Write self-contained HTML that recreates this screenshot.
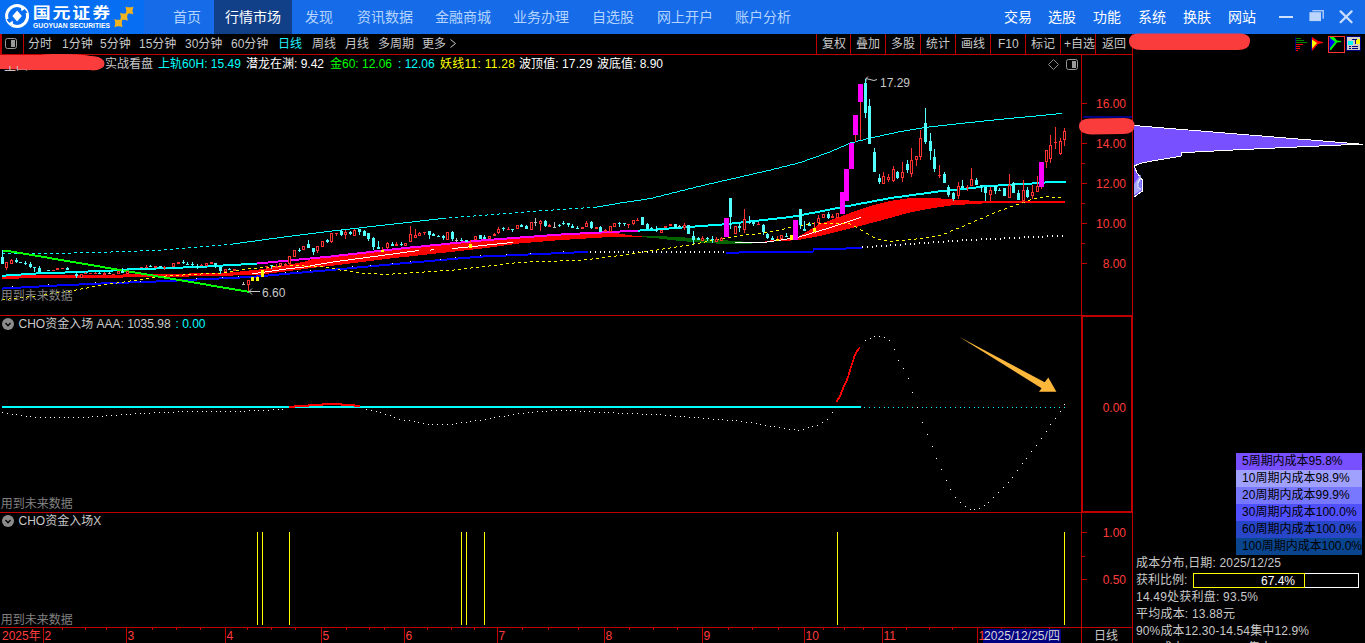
<!DOCTYPE html>
<html lang="zh-CN"><head><meta charset="utf-8"><title>国元证券</title>
<style>
html,body{margin:0;padding:0;background:#000;overflow:hidden}
svg{display:block;font-family:'Liberation Sans','Noto Sans CJK SC',sans-serif}
text{white-space:pre}
</style></head><body>
<svg width="1365" height="643" viewBox="0 0 1365 643">
<rect x="0" y="0" width="1365" height="34" fill="#156be8" />
<rect x="0" y="0" width="144" height="34" fill="#056ef2" />
<rect x="214" y="0" width="78" height="34" fill="#113f88" />
<g>
<circle cx="17.1" cy="16" r="10.5" fill="none" stroke="#fff" stroke-width="3"/>
<path d="M17.1 10.4 L21.9 15.9 L17.1 21.4 L12.4 15.9 Z" fill="#fff"/>
<path d="M22.5 6.5 L27.5 12.5 L24 14 L21 8.5 Z" fill="#056ef2"/>
<path d="M11.5 25.5 L6.5 19.5 L10 18 L13 23.5 Z" fill="#056ef2"/>
<path d="M20.5 6 L25.8 8.2 L21.6 11.2 Z" fill="#fff"/>
<path d="M13.6 26 L8.3 23.8 L12.5 20.8 Z" fill="#fff"/>
</g>
<g transform="scale(1.24 1)">
<text x="26.5" y="18.5" fill="#fff" font-size="14.5" text-anchor="start" font-weight="700" textLength="62.3" lengthAdjust="spacing">国元证券</text>
</g>
<text x="33" y="27.7" fill="#fff" font-size="6.9" text-anchor="start" font-weight="700" textLength="77" lengthAdjust="spacingAndGlyphs">GUOYUAN SECURITIES</text>
<path d="M114.3 18.900000000000002 Q118.5 20.79 122.7 18.900000000000002 Q120.81 23.1 122.7 27.3 Q118.5 25.410000000000004 114.3 27.3 Q116.19 23.1 114.3 18.900000000000002Z" fill="#f0b420"/>
<path d="M120 12.7 Q124 14.5 128 12.7 Q126.2 16.7 128 20.7 Q124 18.9 120 20.7 Q121.8 16.7 120 12.7Z" fill="#f0b420"/>
<path d="M125.4 6.4 Q129.4 8.2 133.4 6.4 Q131.6 10.4 133.4 14.4 Q129.4 12.600000000000001 125.4 14.4 Q127.2 10.4 125.4 6.4Z" fill="#f0b420"/>
<text x="173" y="22" fill="#b4d4ff" font-size="14" text-anchor="start" >首页</text>
<text x="225" y="22" fill="#fff" font-size="14" text-anchor="start" >行情市场</text>
<text x="305" y="22" fill="#b4d4ff" font-size="14" text-anchor="start" >发现</text>
<text x="357" y="22" fill="#b4d4ff" font-size="14" text-anchor="start" >资讯数据</text>
<text x="435" y="22" fill="#b4d4ff" font-size="14" text-anchor="start" >金融商城</text>
<text x="513" y="22" fill="#b4d4ff" font-size="14" text-anchor="start" >业务办理</text>
<text x="592" y="22" fill="#b4d4ff" font-size="14" text-anchor="start" >自选股</text>
<text x="657" y="22" fill="#b4d4ff" font-size="14" text-anchor="start" >网上开户</text>
<text x="735" y="22" fill="#b4d4ff" font-size="14" text-anchor="start" >账户分析</text>
<text x="1004" y="22" fill="#fff" font-size="14" text-anchor="start" >交易</text>
<text x="1048" y="22" fill="#fff" font-size="14" text-anchor="start" >选股</text>
<text x="1093" y="22" fill="#fff" font-size="14" text-anchor="start" >功能</text>
<text x="1138" y="22" fill="#fff" font-size="14" text-anchor="start" >系统</text>
<text x="1183" y="22" fill="#fff" font-size="14" text-anchor="start" >换肤</text>
<text x="1228" y="22" fill="#fff" font-size="14" text-anchor="start" >网站</text>
<rect x="1279" y="16" width="14" height="2" fill="#cfe0fc" />
<path d="M1312.3 10.7 H1323.2 V18.8" fill="none" stroke="#a8c8f8" stroke-width="1.5"/>
<rect x="1309.4" y="12.2" width="11.6" height="8.9" fill="#bcd6fb"/>
<path d="M1340.6 11.4 L1351.6 22.2 M1351.6 11.4 L1340.6 22.2" stroke="#c8dcfb" stroke-width="2.3" stroke-linecap="round"/>
<rect x="0" y="54" width="1133" height="1" fill="#c00000" />
<rect x="0" y="34" width="2" height="20" fill="#c00000" />
<rect x="23" y="34" width="1" height="20" fill="#c00000" />
<rect x="5.5" y="38.5" width="11" height="10" rx="2" fill="none" stroke="#9a9a9a" stroke-width="1"/>
<rect x="11" y="40" width="4" height="7" fill="#9a9a9a" />
<text x="28" y="48" fill="#c8c8c8" font-size="12" text-anchor="start" >分时</text>
<text x="62" y="48" fill="#c8c8c8" font-size="12" text-anchor="start" >1分钟</text>
<text x="100" y="48" fill="#c8c8c8" font-size="12" text-anchor="start" >5分钟</text>
<text x="139" y="48" fill="#c8c8c8" font-size="12" text-anchor="start" >15分钟</text>
<text x="185" y="48" fill="#c8c8c8" font-size="12" text-anchor="start" >30分钟</text>
<text x="231" y="48" fill="#c8c8c8" font-size="12" text-anchor="start" >60分钟</text>
<text x="312" y="48" fill="#c8c8c8" font-size="12" text-anchor="start" >周线</text>
<text x="345" y="48" fill="#c8c8c8" font-size="12" text-anchor="start" >月线</text>
<text x="378" y="48" fill="#c8c8c8" font-size="12" text-anchor="start" >多周期</text>
<text x="422" y="48" fill="#c8c8c8" font-size="12" text-anchor="start" >更多</text>
<text x="278" y="48" fill="#20f0ff" font-size="12" text-anchor="start" >日线</text>
<path d="M450.5 39.5 L455.5 43.5 L450.5 47.5" fill="none" stroke="#c8c8c8" stroke-width="1"/>
<rect x="816" y="34" width="1" height="20" fill="#c00000" />
<rect x="850" y="34" width="1" height="20" fill="#c00000" />
<rect x="885" y="34" width="1" height="20" fill="#c00000" />
<rect x="920" y="34" width="1" height="20" fill="#c00000" />
<rect x="955" y="34" width="1" height="20" fill="#c00000" />
<rect x="990" y="34" width="1" height="20" fill="#c00000" />
<rect x="1025" y="34" width="1" height="20" fill="#c00000" />
<rect x="1060" y="34" width="1" height="20" fill="#c00000" />
<rect x="1095" y="34" width="1" height="20" fill="#c00000" />
<text x="822" y="48" fill="#c8c8c8" font-size="12" text-anchor="start" >复权</text>
<text x="856" y="48" fill="#c8c8c8" font-size="12" text-anchor="start" >叠加</text>
<text x="891" y="48" fill="#c8c8c8" font-size="12" text-anchor="start" >多股</text>
<text x="926" y="48" fill="#c8c8c8" font-size="12" text-anchor="start" >统计</text>
<text x="961" y="48" fill="#c8c8c8" font-size="12" text-anchor="start" >画线</text>
<text x="998" y="48" fill="#c8c8c8" font-size="12" text-anchor="start" >F10</text>
<text x="1031" y="48" fill="#c8c8c8" font-size="12" text-anchor="start" >标记</text>
<text x="1064" y="48" fill="#c8c8c8" font-size="12" text-anchor="start" >+自选</text>
<text x="1102" y="48" fill="#c8c8c8" font-size="12" text-anchor="start" >返回</text>
<rect x="1081" y="54" width="1" height="261" fill="#c00000" />
<rect x="1132" y="34" width="1" height="281" fill="#c00000" />
<rect x="0" y="315" width="1081" height="1" fill="#c00000" />
<rect x="1081" y="315" width="52" height="2" fill="#c00000" />
<rect x="1081" y="511" width="52" height="2" fill="#c00000" />
<rect x="1081" y="315" width="2" height="198" fill="#c00000" />
<rect x="1131" y="315" width="2" height="198" fill="#c00000" />
<rect x="0" y="512" width="1081" height="1" fill="#c00000" />
<rect x="1081" y="513" width="1" height="130" fill="#c00000" />
<rect x="1132" y="513" width="1" height="130" fill="#c00000" />
<rect x="0" y="627" width="1133" height="1" fill="#c00000" />
<g shape-rendering="crispEdges">
</g>
<text x="105" y="68" fill="#c8c8c8" font-size="12" text-anchor="start" >实战看盘</text>
<text x="158" y="68" fill="#00ffff" font-size="12" text-anchor="start" textLength="83">上轨60H: 15.49</text>
<text x="246" y="68" fill="#ffffff" font-size="12" text-anchor="start" textLength="78">潜龙在渊: 9.42</text>
<text x="330" y="68" fill="#00ff00" font-size="12" text-anchor="start" textLength="62">金60: 12.06</text>
<text x="398" y="68" fill="#00ffff" font-size="12" text-anchor="start" >: 12.06</text>
<text x="440" y="68" fill="#ffff00" font-size="12" text-anchor="start" textLength="75">妖线11: 11.28</text>
<text x="519" y="68" fill="#ffffff" font-size="12" text-anchor="start" textLength="73.5">波顶值: 17.29</text>
<text x="597" y="68" fill="#ffffff" font-size="12" text-anchor="start" >波底值: 8.90</text>
<g>
<path d="M0 55 L40 55 Q70 52 98 57 Q106 60 104 66 Q100 71 90 70 L40 70 L0 69 Z" fill="#fa3c3c"/>
<text x="4" y="70" fill="#c8c8c8" font-size="12" text-anchor="start" >主图:</text>
<path d="M0 55 L40 55 Q70 52 98 57 Q106 60 104 66 Q100 71 90 70 L40 70 L18 69.5 L18 66 L0 66 Z" fill="#fa3c3c"/>
<path d="M1053.5 59.5 L1058.5 64.5 L1053.5 69.5 L1048.5 64.5 Z" fill="none" stroke="#8c8c8c" stroke-width="1"/>
<rect x="1066.5" y="59.5" width="11" height="10" rx="2" fill="none" stroke="#9a9a9a" stroke-width="1"/>
<rect x="1072" y="61" width="4" height="7" fill="#9a9a9a" />
</g>
<rect x="2" y="254" width="1" height="1" fill="#00ffff" />
<rect x="3" y="253" width="2" height="1" fill="#00ffff" />
<rect x="8" y="253" width="3" height="1" fill="#00ffff" />
<rect x="14" y="253" width="3" height="1" fill="#00ffff" />
<rect x="20" y="253" width="3" height="1" fill="#00ffff" />
<rect x="26" y="253" width="3" height="1" fill="#00ffff" />
<rect x="32" y="253" width="3" height="1" fill="#00ffff" />
<rect x="38" y="253" width="3" height="1" fill="#00ffff" />
<rect x="44" y="253" width="3" height="1" fill="#00ffff" />
<rect x="50" y="253" width="3" height="1" fill="#00ffff" />
<rect x="56" y="253" width="3" height="1" fill="#00ffff" />
<rect x="62" y="253" width="3" height="1" fill="#00ffff" />
<rect x="68" y="253" width="3" height="1" fill="#00ffff" />
<rect x="74" y="252" width="3" height="1" fill="#00ffff" />
<rect x="80" y="252" width="3" height="1" fill="#00ffff" />
<rect x="86" y="252" width="3" height="1" fill="#00ffff" />
<rect x="92" y="252" width="3" height="1" fill="#00ffff" />
<rect x="98" y="252" width="3" height="1" fill="#00ffff" />
<rect x="104" y="252" width="3" height="1" fill="#00ffff" />
<rect x="110" y="252" width="1" height="1" fill="#00ffff" />
<rect x="111" y="251" width="2" height="1" fill="#00ffff" />
<rect x="116" y="251" width="3" height="1" fill="#00ffff" />
<rect x="122" y="251" width="3" height="1" fill="#00ffff" />
<rect x="128" y="251" width="3" height="1" fill="#00ffff" />
<rect x="134" y="251" width="3" height="1" fill="#00ffff" />
<rect x="140" y="250" width="3" height="1" fill="#00ffff" />
<rect x="146" y="250" width="3" height="1" fill="#00ffff" />
<rect x="152" y="250" width="3" height="1" fill="#00ffff" />
<rect x="158" y="250" width="3" height="1" fill="#00ffff" />
<rect x="164" y="249" width="3" height="1" fill="#00ffff" />
<rect x="170" y="249" width="3" height="1" fill="#00ffff" />
<rect x="176" y="248" width="3" height="1" fill="#00ffff" />
<rect x="182" y="248" width="3" height="1" fill="#00ffff" />
<rect x="188" y="247" width="3" height="1" fill="#00ffff" />
<rect x="194" y="247" width="3" height="1" fill="#00ffff" />
<rect x="200" y="246" width="3" height="1" fill="#00ffff" />
<rect x="206" y="246" width="3" height="1" fill="#00ffff" />
<rect x="212" y="245" width="3" height="1" fill="#00ffff" />
<rect x="218" y="245" width="3" height="1" fill="#00ffff" />
<rect x="224" y="244" width="3" height="1" fill="#00ffff" />
<rect x="230" y="244" width="1" height="1" fill="#00ffff" />
<rect x="230" y="244" width="3" height="1" fill="#00ffff" />
<rect x="233" y="243" width="7" height="1" fill="#00ffff" />
<rect x="240" y="242" width="7" height="1" fill="#00ffff" />
<rect x="247" y="241" width="8" height="1" fill="#00ffff" />
<rect x="255" y="240" width="7" height="1" fill="#00ffff" />
<rect x="262" y="239" width="7" height="1" fill="#00ffff" />
<rect x="269" y="238" width="8" height="1" fill="#00ffff" />
<rect x="277" y="237" width="7" height="1" fill="#00ffff" />
<rect x="284" y="236" width="8" height="1" fill="#00ffff" />
<rect x="292" y="235" width="8" height="1" fill="#00ffff" />
<rect x="300" y="234" width="8" height="1" fill="#00ffff" />
<rect x="308" y="233" width="8" height="1" fill="#00ffff" />
<rect x="316" y="232" width="8" height="1" fill="#00ffff" />
<rect x="324" y="231" width="8" height="1" fill="#00ffff" />
<rect x="332" y="230" width="9" height="1" fill="#00ffff" />
<rect x="341" y="229" width="9" height="1" fill="#00ffff" />
<rect x="350" y="228" width="9" height="1" fill="#00ffff" />
<rect x="359" y="227" width="8" height="1" fill="#00ffff" />
<rect x="367" y="226" width="9" height="1" fill="#00ffff" />
<rect x="376" y="225" width="9" height="1" fill="#00ffff" />
<rect x="385" y="224" width="9" height="1" fill="#00ffff" />
<rect x="394" y="223" width="9" height="1" fill="#00ffff" />
<rect x="403" y="222" width="9" height="1" fill="#00ffff" />
<rect x="412" y="221" width="8" height="1" fill="#00ffff" />
<rect x="420" y="220" width="9" height="1" fill="#00ffff" />
<rect x="429" y="219" width="9" height="1" fill="#00ffff" />
<rect x="438" y="218" width="6" height="1" fill="#00ffff" />
<rect x="443" y="218" width="3" height="1" fill="#00ffff" />
<rect x="449" y="217" width="3" height="1" fill="#00ffff" />
<rect x="455" y="217" width="3" height="1" fill="#00ffff" />
<rect x="461" y="216" width="3" height="1" fill="#00ffff" />
<rect x="467" y="216" width="3" height="1" fill="#00ffff" />
<rect x="473" y="216" width="1" height="1" fill="#00ffff" />
<rect x="474" y="215" width="2" height="1" fill="#00ffff" />
<rect x="479" y="215" width="3" height="1" fill="#00ffff" />
<rect x="485" y="215" width="2" height="1" fill="#00ffff" />
<rect x="487" y="214" width="1" height="1" fill="#00ffff" />
<rect x="491" y="214" width="3" height="1" fill="#00ffff" />
<rect x="497" y="214" width="2" height="1" fill="#00ffff" />
<rect x="499" y="213" width="1" height="1" fill="#00ffff" />
<rect x="503" y="213" width="3" height="1" fill="#00ffff" />
<rect x="509" y="213" width="3" height="1" fill="#00ffff" />
<rect x="515" y="212" width="3" height="1" fill="#00ffff" />
<rect x="521" y="212" width="3" height="1" fill="#00ffff" />
<rect x="527" y="211" width="3" height="1" fill="#00ffff" />
<rect x="533" y="211" width="3" height="1" fill="#00ffff" />
<rect x="539" y="210" width="3" height="1" fill="#00ffff" />
<rect x="545" y="210" width="3" height="1" fill="#00ffff" />
<rect x="551" y="210" width="2" height="1" fill="#00ffff" />
<rect x="553" y="209" width="1" height="1" fill="#00ffff" />
<rect x="557" y="209" width="3" height="1" fill="#00ffff" />
<rect x="563" y="209" width="3" height="1" fill="#00ffff" />
<rect x="569" y="208" width="3" height="1" fill="#00ffff" />
<rect x="575" y="208" width="3" height="1" fill="#00ffff" />
<rect x="581" y="208" width="2" height="1" fill="#00ffff" />
<rect x="583" y="207" width="1" height="1" fill="#00ffff" />
<rect x="587" y="207" width="3" height="1" fill="#00ffff" />
<rect x="593" y="207" width="3" height="1" fill="#00ffff" />
<rect x="595" y="207" width="2" height="1" fill="#00ffff" />
<rect x="597" y="206" width="6" height="1" fill="#00ffff" />
<rect x="603" y="205" width="6" height="1" fill="#00ffff" />
<rect x="609" y="204" width="6" height="1" fill="#00ffff" />
<rect x="615" y="203" width="5" height="1" fill="#00ffff" />
<rect x="620" y="202" width="7" height="1" fill="#00ffff" />
<rect x="627" y="201" width="7" height="1" fill="#00ffff" />
<rect x="634" y="200" width="7" height="1" fill="#00ffff" />
<rect x="641" y="199" width="6" height="1" fill="#00ffff" />
<rect x="647" y="198" width="6" height="1" fill="#00ffff" />
<rect x="653" y="197" width="3" height="1" fill="#00ffff" />
<rect x="656" y="196" width="5" height="1" fill="#00ffff" />
<rect x="661" y="195" width="3" height="1" fill="#00ffff" />
<rect x="664" y="194" width="5" height="1" fill="#00ffff" />
<rect x="669" y="193" width="3" height="1" fill="#00ffff" />
<rect x="672" y="192" width="5" height="1" fill="#00ffff" />
<rect x="677" y="191" width="3" height="1" fill="#00ffff" />
<rect x="680" y="190" width="5" height="1" fill="#00ffff" />
<rect x="685" y="189" width="3" height="1" fill="#00ffff" />
<rect x="688" y="188" width="5" height="1" fill="#00ffff" />
<rect x="693" y="187" width="3" height="1" fill="#00ffff" />
<rect x="696" y="186" width="5" height="1" fill="#00ffff" />
<rect x="701" y="185" width="4" height="1" fill="#00ffff" />
<rect x="705" y="184" width="4" height="1" fill="#00ffff" />
<rect x="709" y="183" width="5" height="1" fill="#00ffff" />
<rect x="714" y="182" width="4" height="1" fill="#00ffff" />
<rect x="718" y="181" width="4" height="1" fill="#00ffff" />
<rect x="722" y="180" width="5" height="1" fill="#00ffff" />
<rect x="727" y="179" width="4" height="1" fill="#00ffff" />
<rect x="731" y="178" width="5" height="1" fill="#00ffff" />
<rect x="736" y="177" width="4" height="1" fill="#00ffff" />
<rect x="740" y="176" width="4" height="1" fill="#00ffff" />
<rect x="744" y="175" width="5" height="1" fill="#00ffff" />
<rect x="749" y="174" width="4" height="1" fill="#00ffff" />
<rect x="753" y="173" width="4" height="1" fill="#00ffff" />
<rect x="757" y="172" width="5" height="1" fill="#00ffff" />
<rect x="762" y="171" width="4" height="1" fill="#00ffff" />
<rect x="766" y="170" width="5" height="1" fill="#00ffff" />
<rect x="771" y="169" width="3" height="1" fill="#00ffff" />
<rect x="774" y="168" width="5" height="1" fill="#00ffff" />
<rect x="779" y="167" width="3" height="1" fill="#00ffff" />
<rect x="782" y="166" width="5" height="1" fill="#00ffff" />
<rect x="787" y="165" width="3" height="1" fill="#00ffff" />
<rect x="790" y="164" width="5" height="1" fill="#00ffff" />
<rect x="795" y="163" width="3" height="1" fill="#00ffff" />
<rect x="798" y="162" width="4" height="1" fill="#00ffff" />
<rect x="802" y="161" width="3" height="1" fill="#00ffff" />
<rect x="805" y="160" width="2" height="1" fill="#00ffff" />
<rect x="807" y="159" width="3" height="1" fill="#00ffff" />
<rect x="810" y="158" width="3" height="1" fill="#00ffff" />
<rect x="813" y="157" width="3" height="1" fill="#00ffff" />
<rect x="816" y="156" width="3" height="1" fill="#00ffff" />
<rect x="819" y="155" width="2" height="1" fill="#00ffff" />
<rect x="821" y="154" width="3" height="1" fill="#00ffff" />
<rect x="824" y="153" width="3" height="1" fill="#00ffff" />
<rect x="827" y="152" width="3" height="1" fill="#00ffff" />
<rect x="830" y="151" width="2" height="1" fill="#00ffff" />
<rect x="832" y="150" width="2" height="1" fill="#00ffff" />
<rect x="834" y="149" width="3" height="1" fill="#00ffff" />
<rect x="837" y="148" width="2" height="1" fill="#00ffff" />
<rect x="839" y="147" width="2" height="1" fill="#00ffff" />
<rect x="841" y="146" width="3" height="1" fill="#00ffff" />
<rect x="844" y="145" width="2" height="1" fill="#00ffff" />
<rect x="846" y="144" width="2" height="1" fill="#00ffff" />
<rect x="848" y="143" width="2" height="1" fill="#00ffff" />
<rect x="850" y="142" width="5" height="1" fill="#00ffff" />
<rect x="855" y="141" width="3" height="1" fill="#00ffff" />
<rect x="858" y="140" width="5" height="1" fill="#00ffff" />
<rect x="863" y="139" width="3" height="1" fill="#00ffff" />
<rect x="866" y="138" width="5" height="1" fill="#00ffff" />
<rect x="871" y="137" width="4" height="1" fill="#00ffff" />
<rect x="875" y="136" width="5" height="1" fill="#00ffff" />
<rect x="880" y="135" width="4" height="1" fill="#00ffff" />
<rect x="884" y="134" width="5" height="1" fill="#00ffff" />
<rect x="889" y="133" width="5" height="1" fill="#00ffff" />
<rect x="894" y="132" width="4" height="1" fill="#00ffff" />
<rect x="898" y="131" width="6" height="1" fill="#00ffff" />
<rect x="904" y="130" width="6" height="1" fill="#00ffff" />
<rect x="910" y="129" width="6" height="1" fill="#00ffff" />
<rect x="916" y="128" width="6" height="1" fill="#00ffff" />
<rect x="922" y="127" width="7" height="1" fill="#00ffff" />
<rect x="929" y="126" width="9" height="1" fill="#00ffff" />
<rect x="938" y="125" width="9" height="1" fill="#00ffff" />
<rect x="947" y="124" width="9" height="1" fill="#00ffff" />
<rect x="956" y="123" width="9" height="1" fill="#00ffff" />
<rect x="965" y="122" width="10" height="1" fill="#00ffff" />
<rect x="975" y="121" width="9" height="1" fill="#00ffff" />
<rect x="984" y="120" width="10" height="1" fill="#00ffff" />
<rect x="994" y="119" width="10" height="1" fill="#00ffff" />
<rect x="1004" y="118" width="10" height="1" fill="#00ffff" />
<rect x="1014" y="117" width="11" height="1" fill="#00ffff" />
<rect x="1025" y="116" width="11" height="1" fill="#00ffff" />
<rect x="1036" y="115" width="10" height="1" fill="#00ffff" />
<rect x="1046" y="114" width="10" height="1" fill="#00ffff" />
<rect x="1056" y="113" width="6" height="1" fill="#00ffff" />
<rect x="2" y="288" width="1" height="2" fill="#0000ff" />
<rect x="3" y="287" width="18" height="2" fill="#0000ff" />
<rect x="21" y="286" width="18" height="2" fill="#0000ff" />
<rect x="39" y="285" width="18" height="2" fill="#0000ff" />
<rect x="57" y="284" width="22" height="2" fill="#0000ff" />
<rect x="79" y="283" width="22" height="2" fill="#0000ff" />
<rect x="101" y="282" width="28" height="2" fill="#0000ff" />
<rect x="129" y="281" width="27" height="2" fill="#0000ff" />
<rect x="156" y="280" width="21" height="2" fill="#0000ff" />
<rect x="177" y="279" width="20" height="2" fill="#0000ff" />
<rect x="197" y="278" width="22" height="2" fill="#0000ff" />
<rect x="219" y="277" width="21" height="2" fill="#0000ff" />
<rect x="240" y="276" width="16" height="2" fill="#0000ff" />
<rect x="256" y="275" width="12" height="2" fill="#0000ff" />
<rect x="268" y="274" width="11" height="2" fill="#0000ff" />
<rect x="279" y="273" width="11" height="2" fill="#0000ff" />
<rect x="290" y="272" width="12" height="2" fill="#0000ff" />
<rect x="302" y="271" width="11" height="2" fill="#0000ff" />
<rect x="313" y="270" width="12" height="2" fill="#0000ff" />
<rect x="325" y="269" width="11" height="2" fill="#0000ff" />
<rect x="336" y="268" width="11" height="2" fill="#0000ff" />
<rect x="347" y="267" width="10" height="2" fill="#0000ff" />
<rect x="357" y="266" width="11" height="2" fill="#0000ff" />
<rect x="368" y="265" width="11" height="2" fill="#0000ff" />
<rect x="379" y="264" width="11" height="2" fill="#0000ff" />
<rect x="390" y="263" width="10" height="2" fill="#0000ff" />
<rect x="400" y="262" width="12" height="2" fill="#0000ff" />
<rect x="412" y="261" width="12" height="2" fill="#0000ff" />
<rect x="424" y="260" width="11" height="2" fill="#0000ff" />
<rect x="435" y="259" width="12" height="2" fill="#0000ff" />
<rect x="447" y="258" width="11" height="2" fill="#0000ff" />
<rect x="458" y="257" width="12" height="2" fill="#0000ff" />
<rect x="470" y="256" width="13" height="2" fill="#0000ff" />
<rect x="483" y="255" width="23" height="2" fill="#0000ff" />
<rect x="506" y="254" width="22" height="2" fill="#0000ff" />
<rect x="528" y="253" width="23" height="2" fill="#0000ff" />
<rect x="551" y="252" width="23" height="2" fill="#0000ff" />
<rect x="574" y="251" width="14" height="2" fill="#0000ff" />
<rect x="726" y="252" width="13" height="2" fill="#0000ff" />
<rect x="739" y="251" width="74" height="2" fill="#0000ff" />
<rect x="813" y="248" width="1" height="4" fill="#0000ff" />
<rect x="814" y="248" width="32" height="2" fill="#0000ff" />
<rect x="846" y="247" width="16" height="2" fill="#0000ff" />
<rect x="590" y="251" width="1" height="2" fill="#fff" />
<rect x="595" y="251" width="1" height="2" fill="#fff" />
<rect x="600" y="251" width="1" height="2" fill="#fff" />
<rect x="604" y="251" width="1" height="2" fill="#fff" />
<rect x="609" y="251" width="1" height="2" fill="#fff" />
<rect x="614" y="251" width="1" height="2" fill="#fff" />
<rect x="618" y="251" width="1" height="2" fill="#fff" />
<rect x="623" y="251" width="1" height="2" fill="#fff" />
<rect x="628" y="251" width="1" height="2" fill="#fff" />
<rect x="633" y="251" width="1" height="2" fill="#fff" />
<rect x="638" y="251" width="1" height="2" fill="#fff" />
<rect x="642" y="251" width="1" height="2" fill="#fff" />
<rect x="647" y="251" width="1" height="2" fill="#fff" />
<rect x="652" y="251" width="1" height="2" fill="#fff" />
<rect x="656" y="251" width="1" height="2" fill="#fff" />
<rect x="661" y="251" width="1" height="2" fill="#fff" />
<rect x="666" y="251" width="1" height="2" fill="#fff" />
<rect x="671" y="251" width="1" height="2" fill="#fff" />
<rect x="676" y="251" width="1" height="2" fill="#fff" />
<rect x="680" y="251" width="1" height="2" fill="#fff" />
<rect x="685" y="251" width="1" height="2" fill="#fff" />
<rect x="690" y="251" width="1" height="2" fill="#fff" />
<rect x="694" y="251" width="1" height="2" fill="#fff" />
<rect x="699" y="251" width="1" height="2" fill="#fff" />
<rect x="704" y="251" width="1" height="2" fill="#fff" />
<rect x="709" y="251" width="1" height="2" fill="#fff" />
<rect x="714" y="251" width="1" height="2" fill="#fff" />
<rect x="718" y="251" width="1" height="2" fill="#fff" />
<rect x="723" y="251" width="1" height="2" fill="#fff" />
<rect x="862" y="246" width="1" height="2" fill="#fff" />
<rect x="867" y="246" width="1" height="2" fill="#fff" />
<rect x="872" y="246" width="1" height="2" fill="#fff" />
<rect x="876" y="245" width="1" height="2" fill="#fff" />
<rect x="881" y="245" width="1" height="2" fill="#fff" />
<rect x="886" y="245" width="1" height="2" fill="#fff" />
<rect x="890" y="244" width="1" height="2" fill="#fff" />
<rect x="895" y="244" width="1" height="2" fill="#fff" />
<rect x="900" y="244" width="1" height="2" fill="#fff" />
<rect x="905" y="243" width="1" height="2" fill="#fff" />
<rect x="910" y="243" width="1" height="2" fill="#fff" />
<rect x="914" y="243" width="1" height="2" fill="#fff" />
<rect x="919" y="242" width="1" height="2" fill="#fff" />
<rect x="924" y="242" width="1" height="2" fill="#fff" />
<rect x="928" y="242" width="1" height="2" fill="#fff" />
<rect x="933" y="241" width="1" height="2" fill="#fff" />
<rect x="938" y="241" width="1" height="2" fill="#fff" />
<rect x="943" y="241" width="1" height="2" fill="#fff" />
<rect x="948" y="240" width="1" height="2" fill="#fff" />
<rect x="952" y="240" width="1" height="2" fill="#fff" />
<rect x="957" y="240" width="1" height="2" fill="#fff" />
<rect x="962" y="239" width="1" height="2" fill="#fff" />
<rect x="966" y="239" width="1" height="2" fill="#fff" />
<rect x="971" y="239" width="1" height="2" fill="#fff" />
<rect x="976" y="239" width="1" height="2" fill="#fff" />
<rect x="981" y="238" width="1" height="2" fill="#fff" />
<rect x="986" y="238" width="1" height="2" fill="#fff" />
<rect x="990" y="238" width="1" height="2" fill="#fff" />
<rect x="995" y="238" width="1" height="2" fill="#fff" />
<rect x="1000" y="238" width="1" height="2" fill="#fff" />
<rect x="1004" y="237" width="1" height="2" fill="#fff" />
<rect x="1009" y="237" width="1" height="2" fill="#fff" />
<rect x="1014" y="237" width="1" height="2" fill="#fff" />
<rect x="1019" y="237" width="1" height="2" fill="#fff" />
<rect x="1024" y="236" width="1" height="2" fill="#fff" />
<rect x="1028" y="236" width="1" height="2" fill="#fff" />
<rect x="1033" y="236" width="1" height="2" fill="#fff" />
<rect x="1038" y="236" width="1" height="2" fill="#fff" />
<rect x="1042" y="236" width="1" height="2" fill="#fff" />
<rect x="1047" y="235" width="1" height="2" fill="#fff" />
<rect x="1052" y="235" width="1" height="2" fill="#fff" />
<rect x="1057" y="235" width="1" height="2" fill="#fff" />
<rect x="1062" y="235" width="1" height="2" fill="#fff" />
<rect x="12" y="286" width="1" height="1" fill="#fff" />
<rect x="48" y="284" width="1" height="1" fill="#fff" />
<rect x="95" y="282" width="1" height="1" fill="#fff" />
<rect x="140" y="281" width="1" height="1" fill="#fff" />
<rect x="175" y="279" width="1" height="1" fill="#fff" />
<rect x="196" y="278" width="1" height="1" fill="#fff" />
<rect x="222" y="277" width="1" height="1" fill="#fff" />
<rect x="238" y="276" width="1" height="1" fill="#fff" />
<rect x="262" y="274" width="1" height="1" fill="#fff" />
<rect x="285" y="272" width="1" height="1" fill="#fff" />
<rect x="297" y="271" width="1" height="1" fill="#fff" />
<rect x="310" y="270" width="1" height="1" fill="#fff" />
<rect x="332" y="268" width="1" height="1" fill="#fff" />
<rect x="352" y="266" width="1" height="1" fill="#fff" />
<rect x="370" y="265" width="1" height="1" fill="#fff" />
<rect x="392" y="263" width="1" height="1" fill="#fff" />
<rect x="410" y="261" width="1" height="1" fill="#fff" />
<rect x="440" y="259" width="1" height="1" fill="#fff" />
<rect x="455" y="257" width="1" height="1" fill="#fff" />
<rect x="480" y="255" width="1" height="1" fill="#fff" />
<rect x="506" y="254" width="1" height="1" fill="#fff" />
<rect x="530" y="253" width="1" height="1" fill="#fff" />
<rect x="563" y="251" width="1" height="1" fill="#fff" />
<polyline points="2,263 2,250" fill="none" stroke="#00ffff" stroke-width="1" shape-rendering="crispEdges" />
<rect x="2" y="276" width="17" height="3" fill="#ff0000" />
<rect x="19" y="275" width="104" height="3" fill="#ff0000" />
<rect x="123" y="274" width="66" height="3" fill="#ff0000" />
<rect x="189" y="273" width="16" height="3" fill="#ff0000" />
<polygon points="204,273.3 230,272.5 261,269.3 280,266.2 292,264 305,261.5 315,257.9 320,257.5 325,257.0 330,256.5 335,255.9 340,255.4 345,254.8 350,254.2 355,253.6 360,253.1 365,252.5 370,251.9 375,251.4 380,250.8 385,250.2 390,249.6 395,249.1 400,248.5 405,248.0 410,247.5 415,247.0 420,246.5 425,246.0 430,245.5 435,245.0 440,244.5 445,244.0 450,243.5 455,243.0 460,242.5 465,242.0 470,241.5 475,241.0 480,240.5 485,240.1 490,239.8 495,239.4 500,239.0 505,238.6 510,238.2 515,237.9 520,237.5 525,237.1 530,236.8 535,236.4 540,236.0 545,235.6 550,235.2 555,234.9 560,234.5 565,234.2 570,234.0 575,233.8 580,233.5 585,233.2 590,233.0 595,232.8 600,232.5 605,232.2 610,232.0 612,232.5 632,235.5 642,236 642,237 615,236.7 600,237.6 560,240.1 520,243.4 480,248.8 390,258.5 330,266 310,268.2 292,270.7 261,274.5 230,275.6 204,276.3" fill="#ff0000" shape-rendering="crispEdges"/>
<polygon points="642,235.5 655,235.8 690,237.8 720,240 740,241.3 752,242.3 752,244 720,243.8 690,241.8 673,240.2 655,238 642,237.2" fill="#006400" shape-rendering="crispEdges"/>
<polygon points="765,241 797,237.5 810,229.8 820,224 840,216.7 850,213 870,206 890,201 910,198 940,198.4 960,200.1 990,201.5 1065,201 1065,203.2 990,203.2 975,203.8 950,205.6 930,208.6 910,212.4 890,218 860,226 840,231 820,236 797,240.2 765,242" fill="#ff0000" shape-rendering="crispEdges"/>
<rect x="252" y="273" width="6" height="1" fill="#fff" />
<rect x="258" y="272" width="7" height="1" fill="#fff" />
<rect x="265" y="271" width="7" height="1" fill="#fff" />
<rect x="272" y="270" width="7" height="1" fill="#fff" />
<rect x="279" y="269" width="7" height="1" fill="#fff" />
<rect x="286" y="268" width="9" height="1" fill="#fff" />
<rect x="295" y="267" width="9" height="1" fill="#fff" />
<rect x="304" y="266" width="6" height="1" fill="#fff" />
<rect x="310" y="265" width="5" height="1" fill="#fff" />
<rect x="315" y="264" width="6" height="1" fill="#fff" />
<rect x="321" y="263" width="6" height="1" fill="#fff" />
<rect x="327" y="262" width="6" height="1" fill="#fff" />
<rect x="333" y="261" width="7" height="1" fill="#fff" />
<rect x="340" y="260" width="8" height="1" fill="#fff" />
<rect x="348" y="259" width="7" height="1" fill="#fff" />
<rect x="355" y="258" width="8" height="1" fill="#fff" />
<rect x="363" y="257" width="7" height="1" fill="#fff" />
<rect x="370" y="256" width="8" height="1" fill="#fff" />
<rect x="378" y="255" width="7" height="1" fill="#fff" />
<rect x="385" y="254" width="8" height="1" fill="#fff" />
<rect x="393" y="253" width="7" height="1" fill="#fff" />
<rect x="400" y="252" width="7" height="1" fill="#fff" />
<rect x="407" y="251" width="8" height="1" fill="#fff" />
<rect x="415" y="250" width="4" height="1" fill="#fff" />
<rect x="430" y="250" width="1" height="1" fill="#fff" />
<rect x="431" y="249" width="3" height="1" fill="#fff" />
<rect x="452" y="248" width="6" height="1" fill="#fff" />
<rect x="458" y="247" width="10" height="1" fill="#fff" />
<rect x="468" y="246" width="10" height="1" fill="#fff" />
<rect x="478" y="245" width="9" height="1" fill="#fff" />
<rect x="487" y="244" width="10" height="1" fill="#fff" />
<rect x="497" y="243" width="10" height="1" fill="#fff" />
<rect x="507" y="242" width="6" height="1" fill="#fff" />
<rect x="735" y="242" width="32" height="1" fill="#fff" />
<rect x="767" y="241" width="7" height="1" fill="#fff" />
<rect x="774" y="240" width="7" height="1" fill="#fff" />
<rect x="781" y="239" width="6" height="1" fill="#fff" />
<rect x="787" y="238" width="7" height="1" fill="#fff" />
<rect x="794" y="237" width="5" height="1" fill="#fff" />
<rect x="799" y="236" width="3" height="1" fill="#fff" />
<rect x="802" y="235" width="4" height="1" fill="#fff" />
<rect x="806" y="234" width="3" height="1" fill="#fff" />
<rect x="809" y="233" width="3" height="1" fill="#fff" />
<rect x="812" y="232" width="4" height="1" fill="#fff" />
<rect x="816" y="231" width="3" height="1" fill="#fff" />
<rect x="819" y="230" width="3" height="1" fill="#fff" />
<rect x="822" y="229" width="4" height="1" fill="#fff" />
<rect x="826" y="228" width="3" height="1" fill="#fff" />
<rect x="829" y="227" width="3" height="1" fill="#fff" />
<rect x="832" y="226" width="3" height="1" fill="#fff" />
<rect x="835" y="225" width="3" height="1" fill="#fff" />
<rect x="838" y="224" width="3" height="1" fill="#fff" />
<rect x="841" y="223" width="3" height="1" fill="#fff" />
<rect x="844" y="222" width="3" height="1" fill="#fff" />
<rect x="847" y="221" width="3" height="1" fill="#fff" />
<rect x="850" y="220" width="3" height="1" fill="#fff" />
<rect x="853" y="219" width="3" height="1" fill="#fff" />
<rect x="856" y="218" width="3" height="1" fill="#fff" />
<rect x="859" y="217" width="2" height="1" fill="#fff" />
<rect x="2" y="299" width="3" height="1" fill="#ffff00" />
<rect x="8" y="299" width="1" height="1" fill="#ffff00" />
<rect x="9" y="298" width="2" height="1" fill="#ffff00" />
<rect x="14" y="298" width="3" height="1" fill="#ffff00" />
<rect x="20" y="297" width="3" height="1" fill="#ffff00" />
<rect x="26" y="297" width="1" height="1" fill="#ffff00" />
<rect x="27" y="296" width="2" height="1" fill="#ffff00" />
<rect x="32" y="296" width="3" height="1" fill="#ffff00" />
<rect x="38" y="295" width="3" height="1" fill="#ffff00" />
<rect x="44" y="294" width="3" height="1" fill="#ffff00" />
<rect x="50" y="293" width="3" height="1" fill="#ffff00" />
<rect x="56" y="292" width="3" height="1" fill="#ffff00" />
<rect x="62" y="292" width="2" height="1" fill="#ffff00" />
<rect x="64" y="291" width="1" height="1" fill="#ffff00" />
<rect x="68" y="291" width="2" height="1" fill="#ffff00" />
<rect x="70" y="290" width="1" height="1" fill="#ffff00" />
<rect x="74" y="290" width="2" height="1" fill="#ffff00" />
<rect x="76" y="289" width="1" height="1" fill="#ffff00" />
<rect x="80" y="289" width="1" height="1" fill="#ffff00" />
<rect x="81" y="288" width="2" height="1" fill="#ffff00" />
<rect x="86" y="288" width="1" height="1" fill="#ffff00" />
<rect x="87" y="287" width="2" height="1" fill="#ffff00" />
<rect x="92" y="286" width="3" height="1" fill="#ffff00" />
<rect x="98" y="285" width="3" height="1" fill="#ffff00" />
<rect x="104" y="284" width="3" height="1" fill="#ffff00" />
<rect x="110" y="283" width="3" height="1" fill="#ffff00" />
<rect x="116" y="283" width="1" height="1" fill="#ffff00" />
<rect x="117" y="282" width="2" height="1" fill="#ffff00" />
<rect x="122" y="282" width="2" height="1" fill="#ffff00" />
<rect x="124" y="281" width="1" height="1" fill="#ffff00" />
<rect x="128" y="281" width="2" height="1" fill="#ffff00" />
<rect x="130" y="280" width="1" height="1" fill="#ffff00" />
<rect x="134" y="280" width="3" height="1" fill="#ffff00" />
<rect x="140" y="279" width="3" height="1" fill="#ffff00" />
<rect x="146" y="278" width="3" height="1" fill="#ffff00" />
<rect x="152" y="277" width="3" height="1" fill="#ffff00" />
<rect x="158" y="276" width="3" height="1" fill="#ffff00" />
<rect x="164" y="276" width="2" height="1" fill="#ffff00" />
<rect x="166" y="275" width="1" height="1" fill="#ffff00" />
<rect x="170" y="275" width="3" height="1" fill="#ffff00" />
<rect x="176" y="275" width="3" height="1" fill="#ffff00" />
<rect x="182" y="275" width="1" height="1" fill="#ffff00" />
<rect x="183" y="274" width="2" height="1" fill="#ffff00" />
<rect x="188" y="274" width="3" height="1" fill="#ffff00" />
<rect x="194" y="274" width="3" height="1" fill="#ffff00" />
<rect x="200" y="274" width="1" height="1" fill="#ffff00" />
<rect x="201" y="273" width="2" height="1" fill="#ffff00" />
<rect x="206" y="273" width="3" height="1" fill="#ffff00" />
<rect x="212" y="273" width="3" height="1" fill="#ffff00" />
<rect x="218" y="273" width="2" height="1" fill="#ffff00" />
<rect x="220" y="272" width="1" height="1" fill="#ffff00" />
<rect x="224" y="272" width="3" height="1" fill="#ffff00" />
<rect x="230" y="271" width="3" height="1" fill="#ffff00" />
<rect x="236" y="270" width="3" height="1" fill="#ffff00" />
<rect x="242" y="269" width="3" height="1" fill="#ffff00" />
<rect x="248" y="268" width="3" height="1" fill="#ffff00" />
<rect x="254" y="268" width="3" height="1" fill="#ffff00" />
<rect x="260" y="267" width="3" height="1" fill="#ffff00" />
<rect x="266" y="267" width="3" height="1" fill="#ffff00" />
<rect x="272" y="266" width="3" height="1" fill="#ffff00" />
<rect x="278" y="266" width="3" height="1" fill="#ffff00" />
<rect x="284" y="265" width="3" height="1" fill="#ffff00" />
<rect x="290" y="265" width="3" height="1" fill="#ffff00" />
<rect x="296" y="265" width="3" height="1" fill="#ffff00" />
<rect x="302" y="265" width="2" height="1" fill="#ffff00" />
<rect x="304" y="266" width="1" height="1" fill="#ffff00" />
<rect x="308" y="266" width="3" height="1" fill="#ffff00" />
<rect x="314" y="266" width="3" height="1" fill="#ffff00" />
<rect x="320" y="266" width="3" height="1" fill="#ffff00" />
<rect x="326" y="267" width="3" height="1" fill="#ffff00" />
<rect x="332" y="268" width="3" height="1" fill="#ffff00" />
<rect x="338" y="269" width="2" height="1" fill="#ffff00" />
<rect x="340" y="270" width="1" height="1" fill="#ffff00" />
<rect x="344" y="270" width="3" height="1" fill="#ffff00" />
<rect x="350" y="271" width="3" height="1" fill="#ffff00" />
<rect x="356" y="272" width="3" height="1" fill="#ffff00" />
<rect x="362" y="273" width="3" height="1" fill="#ffff00" />
<rect x="368" y="273" width="3" height="1" fill="#ffff00" />
<rect x="374" y="273" width="3" height="1" fill="#ffff00" />
<rect x="380" y="274" width="3" height="1" fill="#ffff00" />
<rect x="386" y="274" width="3" height="1" fill="#ffff00" />
<rect x="392" y="274" width="1" height="1" fill="#ffff00" />
<rect x="393" y="273" width="2" height="1" fill="#ffff00" />
<rect x="398" y="273" width="3" height="1" fill="#ffff00" />
<rect x="404" y="273" width="3" height="1" fill="#ffff00" />
<rect x="410" y="272" width="3" height="1" fill="#ffff00" />
<rect x="416" y="272" width="3" height="1" fill="#ffff00" />
<rect x="422" y="272" width="2" height="1" fill="#ffff00" />
<rect x="424" y="271" width="1" height="1" fill="#ffff00" />
<rect x="428" y="271" width="3" height="1" fill="#ffff00" />
<rect x="434" y="271" width="3" height="1" fill="#ffff00" />
<rect x="440" y="270" width="3" height="1" fill="#ffff00" />
<rect x="446" y="270" width="3" height="1" fill="#ffff00" />
<rect x="452" y="270" width="2" height="1" fill="#ffff00" />
<rect x="454" y="269" width="1" height="1" fill="#ffff00" />
<rect x="458" y="269" width="3" height="1" fill="#ffff00" />
<rect x="464" y="268" width="3" height="1" fill="#ffff00" />
<rect x="470" y="268" width="1" height="1" fill="#ffff00" />
<rect x="471" y="267" width="2" height="1" fill="#ffff00" />
<rect x="476" y="267" width="3" height="1" fill="#ffff00" />
<rect x="482" y="266" width="3" height="1" fill="#ffff00" />
<rect x="488" y="266" width="1" height="1" fill="#ffff00" />
<rect x="489" y="265" width="2" height="1" fill="#ffff00" />
<rect x="494" y="265" width="3" height="1" fill="#ffff00" />
<rect x="500" y="264" width="3" height="1" fill="#ffff00" />
<rect x="506" y="263" width="3" height="1" fill="#ffff00" />
<rect x="512" y="263" width="2" height="1" fill="#ffff00" />
<rect x="514" y="262" width="1" height="1" fill="#ffff00" />
<rect x="518" y="262" width="3" height="1" fill="#ffff00" />
<rect x="524" y="262" width="3" height="1" fill="#ffff00" />
<rect x="530" y="261" width="3" height="1" fill="#ffff00" />
<rect x="536" y="261" width="3" height="1" fill="#ffff00" />
<rect x="542" y="261" width="3" height="1" fill="#ffff00" />
<rect x="548" y="261" width="3" height="1" fill="#ffff00" />
<rect x="554" y="261" width="3" height="1" fill="#ffff00" />
<rect x="560" y="260" width="3" height="1" fill="#ffff00" />
<rect x="566" y="260" width="3" height="1" fill="#ffff00" />
<rect x="572" y="260" width="3" height="1" fill="#ffff00" />
<rect x="578" y="260" width="3" height="1" fill="#ffff00" />
<rect x="584" y="259" width="3" height="1" fill="#ffff00" />
<rect x="590" y="259" width="2" height="1" fill="#ffff00" />
<rect x="592" y="258" width="1" height="1" fill="#ffff00" />
<rect x="596" y="258" width="3" height="1" fill="#ffff00" />
<rect x="602" y="257" width="3" height="1" fill="#ffff00" />
<rect x="608" y="256" width="3" height="1" fill="#ffff00" />
<rect x="614" y="256" width="2" height="1" fill="#ffff00" />
<rect x="616" y="255" width="1" height="1" fill="#ffff00" />
<rect x="620" y="255" width="3" height="1" fill="#ffff00" />
<rect x="626" y="254" width="3" height="1" fill="#ffff00" />
<rect x="632" y="253" width="3" height="1" fill="#ffff00" />
<rect x="638" y="252" width="3" height="1" fill="#ffff00" />
<rect x="644" y="251" width="3" height="1" fill="#ffff00" />
<rect x="650" y="250" width="3" height="1" fill="#ffff00" />
<rect x="656" y="250" width="1" height="1" fill="#ffff00" />
<rect x="657" y="249" width="2" height="1" fill="#ffff00" />
<rect x="662" y="249" width="1" height="1" fill="#ffff00" />
<rect x="663" y="248" width="2" height="1" fill="#ffff00" />
<rect x="668" y="248" width="2" height="1" fill="#ffff00" />
<rect x="670" y="247" width="1" height="1" fill="#ffff00" />
<rect x="674" y="247" width="2" height="1" fill="#ffff00" />
<rect x="676" y="246" width="1" height="1" fill="#ffff00" />
<rect x="680" y="246" width="2" height="1" fill="#ffff00" />
<rect x="682" y="245" width="1" height="1" fill="#ffff00" />
<rect x="686" y="245" width="3" height="1" fill="#ffff00" />
<rect x="692" y="244" width="2" height="1" fill="#ffff00" />
<rect x="694" y="243" width="1" height="1" fill="#ffff00" />
<rect x="698" y="243" width="2" height="1" fill="#ffff00" />
<rect x="700" y="242" width="1" height="1" fill="#ffff00" />
<rect x="704" y="242" width="1" height="1" fill="#ffff00" />
<rect x="705" y="241" width="2" height="1" fill="#ffff00" />
<rect x="710" y="240" width="3" height="1" fill="#ffff00" />
<rect x="716" y="239" width="3" height="1" fill="#ffff00" />
<rect x="722" y="238" width="3" height="1" fill="#ffff00" />
<rect x="728" y="237" width="3" height="1" fill="#ffff00" />
<rect x="734" y="236" width="3" height="1" fill="#ffff00" />
<rect x="740" y="235" width="3" height="1" fill="#ffff00" />
<rect x="746" y="234" width="3" height="1" fill="#ffff00" />
<rect x="752" y="234" width="3" height="1" fill="#ffff00" />
<rect x="758" y="233" width="3" height="1" fill="#ffff00" />
<rect x="764" y="232" width="3" height="1" fill="#ffff00" />
<rect x="770" y="231" width="3" height="1" fill="#ffff00" />
<rect x="776" y="230" width="3" height="1" fill="#ffff00" />
<rect x="782" y="229" width="2" height="1" fill="#ffff00" />
<rect x="784" y="228" width="1" height="1" fill="#ffff00" />
<rect x="788" y="227" width="3" height="1" fill="#ffff00" />
<rect x="794" y="226" width="3" height="1" fill="#ffff00" />
<rect x="800" y="225" width="3" height="1" fill="#ffff00" />
<rect x="806" y="224" width="2" height="1" fill="#ffff00" />
<rect x="808" y="223" width="1" height="1" fill="#ffff00" />
<rect x="812" y="223" width="3" height="1" fill="#ffff00" />
<rect x="818" y="223" width="3" height="1" fill="#ffff00" />
<rect x="824" y="223" width="3" height="1" fill="#ffff00" />
<rect x="830" y="223" width="3" height="1" fill="#ffff00" />
<rect x="836" y="223" width="3" height="1" fill="#ffff00" />
<rect x="842" y="223" width="3" height="1" fill="#ffff00" />
<rect x="848" y="223" width="2" height="1" fill="#ffff00" />
<rect x="850" y="224" width="1" height="1" fill="#ffff00" />
<rect x="854" y="226" width="2" height="1" fill="#ffff00" />
<rect x="856" y="227" width="1" height="1" fill="#ffff00" />
<rect x="860" y="229" width="1" height="1" fill="#ffff00" />
<rect x="861" y="230" width="2" height="1" fill="#ffff00" />
<rect x="866" y="233" width="2" height="1" fill="#ffff00" />
<rect x="868" y="234" width="1" height="1" fill="#ffff00" />
<rect x="872" y="236" width="1" height="1" fill="#ffff00" />
<rect x="873" y="237" width="2" height="1" fill="#ffff00" />
<rect x="878" y="239" width="3" height="1" fill="#ffff00" />
<rect x="884" y="240" width="3" height="1" fill="#ffff00" />
<rect x="890" y="241" width="3" height="1" fill="#ffff00" />
<rect x="896" y="240" width="3" height="1" fill="#ffff00" />
<rect x="902" y="240" width="3" height="1" fill="#ffff00" />
<rect x="908" y="239" width="3" height="1" fill="#ffff00" />
<rect x="914" y="239" width="2" height="1" fill="#ffff00" />
<rect x="916" y="238" width="1" height="1" fill="#ffff00" />
<rect x="920" y="238" width="3" height="1" fill="#ffff00" />
<rect x="926" y="237" width="3" height="1" fill="#ffff00" />
<rect x="932" y="236" width="3" height="1" fill="#ffff00" />
<rect x="938" y="235" width="3" height="1" fill="#ffff00" />
<rect x="944" y="233" width="3" height="1" fill="#ffff00" />
<rect x="950" y="231" width="1" height="1" fill="#ffff00" />
<rect x="951" y="230" width="2" height="1" fill="#ffff00" />
<rect x="956" y="228" width="3" height="1" fill="#ffff00" />
<rect x="962" y="226" width="2" height="1" fill="#ffff00" />
<rect x="964" y="225" width="1" height="1" fill="#ffff00" />
<rect x="968" y="223" width="3" height="1" fill="#ffff00" />
<rect x="974" y="221" width="1" height="1" fill="#ffff00" />
<rect x="975" y="220" width="2" height="1" fill="#ffff00" />
<rect x="980" y="218" width="3" height="1" fill="#ffff00" />
<rect x="986" y="216" width="1" height="1" fill="#ffff00" />
<rect x="987" y="215" width="2" height="1" fill="#ffff00" />
<rect x="992" y="213" width="2" height="1" fill="#ffff00" />
<rect x="994" y="212" width="1" height="1" fill="#ffff00" />
<rect x="998" y="211" width="1" height="1" fill="#ffff00" />
<rect x="999" y="210" width="2" height="1" fill="#ffff00" />
<rect x="1004" y="209" width="1" height="1" fill="#ffff00" />
<rect x="1005" y="208" width="2" height="1" fill="#ffff00" />
<rect x="1010" y="206" width="3" height="1" fill="#ffff00" />
<rect x="1016" y="204" width="3" height="1" fill="#ffff00" />
<rect x="1022" y="202" width="3" height="1" fill="#ffff00" />
<rect x="1028" y="200" width="2" height="1" fill="#ffff00" />
<rect x="1030" y="199" width="1" height="1" fill="#ffff00" />
<rect x="1034" y="198" width="3" height="1" fill="#ffff00" />
<rect x="1040" y="197" width="3" height="1" fill="#ffff00" />
<rect x="1046" y="196" width="3" height="1" fill="#ffff00" />
<rect x="1052" y="197" width="3" height="1" fill="#ffff00" />
<rect x="1058" y="197" width="3" height="1" fill="#ffff00" />
<rect x="2" y="275" width="4" height="2" fill="#00ffff" />
<rect x="6" y="274" width="15" height="2" fill="#00ffff" />
<rect x="21" y="273" width="15" height="2" fill="#00ffff" />
<rect x="36" y="272" width="29" height="2" fill="#00ffff" />
<rect x="65" y="271" width="23" height="2" fill="#00ffff" />
<rect x="88" y="270" width="25" height="2" fill="#00ffff" />
<rect x="113" y="269" width="14" height="2" fill="#00ffff" />
<rect x="127" y="268" width="29" height="2" fill="#00ffff" />
<rect x="156" y="267" width="27" height="2" fill="#00ffff" />
<rect x="183" y="266" width="24" height="2" fill="#00ffff" />
<rect x="207" y="265" width="16" height="2" fill="#00ffff" />
<rect x="223" y="264" width="18" height="2" fill="#00ffff" />
<rect x="241" y="263" width="16" height="2" fill="#00ffff" />
<rect x="257" y="262" width="1" height="2" fill="#00ffff" />
<rect x="257" y="262" width="11" height="2" fill="#ff00ff" />
<rect x="268" y="261" width="10" height="2" fill="#ff00ff" />
<rect x="278" y="260" width="11" height="2" fill="#ff00ff" />
<rect x="289" y="259" width="10" height="2" fill="#ff00ff" />
<rect x="299" y="258" width="11" height="2" fill="#ff00ff" />
<rect x="310" y="257" width="10" height="2" fill="#ff00ff" />
<rect x="320" y="256" width="11" height="2" fill="#ff00ff" />
<rect x="331" y="255" width="8" height="2" fill="#ff00ff" />
<rect x="339" y="254" width="9" height="2" fill="#ff00ff" />
<rect x="348" y="253" width="9" height="2" fill="#ff00ff" />
<rect x="357" y="252" width="9" height="2" fill="#ff00ff" />
<rect x="366" y="251" width="8" height="2" fill="#ff00ff" />
<rect x="374" y="250" width="9" height="2" fill="#ff00ff" />
<rect x="383" y="249" width="9" height="2" fill="#ff00ff" />
<rect x="392" y="248" width="9" height="2" fill="#ff00ff" />
<rect x="401" y="247" width="9" height="2" fill="#ff00ff" />
<rect x="410" y="246" width="11" height="2" fill="#ff00ff" />
<rect x="421" y="245" width="9" height="2" fill="#ff00ff" />
<rect x="430" y="244" width="11" height="2" fill="#ff00ff" />
<rect x="441" y="243" width="9" height="2" fill="#ff00ff" />
<rect x="450" y="242" width="11" height="2" fill="#ff00ff" />
<rect x="461" y="241" width="9" height="2" fill="#ff00ff" />
<rect x="470" y="240" width="11" height="2" fill="#ff00ff" />
<rect x="481" y="239" width="13" height="2" fill="#ff00ff" />
<rect x="494" y="238" width="13" height="2" fill="#ff00ff" />
<rect x="507" y="237" width="13" height="2" fill="#ff00ff" />
<rect x="520" y="236" width="14" height="2" fill="#ff00ff" />
<rect x="534" y="235" width="13" height="2" fill="#ff00ff" />
<rect x="547" y="234" width="14" height="2" fill="#ff00ff" />
<rect x="561" y="233" width="19" height="2" fill="#ff00ff" />
<rect x="580" y="232" width="21" height="2" fill="#ff00ff" />
<rect x="601" y="231" width="19" height="2" fill="#ff00ff" />
<rect x="620" y="230" width="19" height="2" fill="#ff00ff" />
<rect x="638" y="230" width="2" height="2" fill="#00ffff" />
<rect x="640" y="229" width="16" height="2" fill="#00ffff" />
<rect x="656" y="228" width="13" height="2" fill="#00ffff" />
<rect x="669" y="227" width="13" height="2" fill="#00ffff" />
<rect x="682" y="226" width="13" height="2" fill="#00ffff" />
<rect x="695" y="225" width="13" height="2" fill="#00ffff" />
<rect x="708" y="224" width="14" height="2" fill="#00ffff" />
<rect x="722" y="223" width="10" height="2" fill="#00ffff" />
<rect x="732" y="222" width="9" height="2" fill="#00ffff" />
<rect x="741" y="221" width="9" height="2" fill="#00ffff" />
<rect x="750" y="220" width="9" height="2" fill="#00ffff" />
<rect x="759" y="219" width="9" height="2" fill="#00ffff" />
<rect x="768" y="218" width="9" height="2" fill="#00ffff" />
<rect x="777" y="217" width="9" height="2" fill="#00ffff" />
<rect x="786" y="216" width="7" height="2" fill="#00ffff" />
<rect x="793" y="215" width="6" height="2" fill="#00ffff" />
<rect x="799" y="214" width="5" height="2" fill="#00ffff" />
<rect x="804" y="213" width="5" height="2" fill="#00ffff" />
<rect x="809" y="212" width="6" height="2" fill="#00ffff" />
<rect x="815" y="211" width="5" height="2" fill="#00ffff" />
<rect x="820" y="210" width="5" height="2" fill="#00ffff" />
<rect x="825" y="209" width="5" height="2" fill="#00ffff" />
<rect x="830" y="208" width="5" height="2" fill="#00ffff" />
<rect x="835" y="207" width="5" height="2" fill="#00ffff" />
<rect x="840" y="206" width="5" height="2" fill="#00ffff" />
<rect x="845" y="205" width="6" height="2" fill="#00ffff" />
<rect x="851" y="204" width="5" height="2" fill="#00ffff" />
<rect x="856" y="203" width="5" height="2" fill="#00ffff" />
<rect x="861" y="202" width="6" height="2" fill="#00ffff" />
<rect x="867" y="201" width="5" height="2" fill="#00ffff" />
<rect x="872" y="200" width="5" height="2" fill="#00ffff" />
<rect x="877" y="199" width="6" height="2" fill="#00ffff" />
<rect x="883" y="198" width="5" height="2" fill="#00ffff" />
<rect x="888" y="197" width="6" height="2" fill="#00ffff" />
<rect x="894" y="196" width="8" height="2" fill="#00ffff" />
<rect x="902" y="195" width="7" height="2" fill="#00ffff" />
<rect x="909" y="194" width="7" height="2" fill="#00ffff" />
<rect x="916" y="193" width="8" height="2" fill="#00ffff" />
<rect x="924" y="192" width="7" height="2" fill="#00ffff" />
<rect x="931" y="191" width="7" height="2" fill="#00ffff" />
<rect x="938" y="190" width="11" height="2" fill="#00ffff" />
<rect x="949" y="189" width="11" height="2" fill="#00ffff" />
<rect x="960" y="188" width="8" height="2" fill="#00ffff" />
<rect x="968" y="187" width="8" height="2" fill="#00ffff" />
<rect x="976" y="186" width="7" height="2" fill="#00ffff" />
<rect x="983" y="185" width="15" height="2" fill="#00ffff" />
<rect x="998" y="184" width="17" height="2" fill="#00ffff" />
<rect x="1015" y="183" width="17" height="2" fill="#00ffff" />
<rect x="1032" y="182" width="13" height="2" fill="#00ffff" />
<rect x="1045" y="181" width="21" height="2" fill="#00ffff" />
<rect x="2" y="250" width="9" height="2" fill="#00ff00" />
<rect x="11" y="251" width="6" height="2" fill="#00ff00" />
<rect x="17" y="252" width="6" height="2" fill="#00ff00" />
<rect x="23" y="253" width="6" height="2" fill="#00ff00" />
<rect x="29" y="254" width="6" height="2" fill="#00ff00" />
<rect x="35" y="255" width="6" height="2" fill="#00ff00" />
<rect x="41" y="256" width="6" height="2" fill="#00ff00" />
<rect x="47" y="257" width="5" height="2" fill="#00ff00" />
<rect x="52" y="258" width="6" height="2" fill="#00ff00" />
<rect x="58" y="259" width="6" height="2" fill="#00ff00" />
<rect x="64" y="260" width="6" height="2" fill="#00ff00" />
<rect x="70" y="261" width="6" height="2" fill="#00ff00" />
<rect x="76" y="262" width="6" height="2" fill="#00ff00" />
<rect x="82" y="263" width="6" height="2" fill="#00ff00" />
<rect x="88" y="264" width="6" height="2" fill="#00ff00" />
<rect x="94" y="265" width="6" height="2" fill="#00ff00" />
<rect x="100" y="266" width="5" height="2" fill="#00ff00" />
<rect x="105" y="267" width="6" height="2" fill="#00ff00" />
<rect x="111" y="268" width="6" height="2" fill="#00ff00" />
<rect x="117" y="269" width="6" height="2" fill="#00ff00" />
<rect x="123" y="270" width="6" height="2" fill="#00ff00" />
<rect x="129" y="271" width="6" height="2" fill="#00ff00" />
<rect x="135" y="272" width="6" height="2" fill="#00ff00" />
<rect x="141" y="273" width="6" height="2" fill="#00ff00" />
<rect x="147" y="274" width="6" height="2" fill="#00ff00" />
<rect x="153" y="275" width="5" height="2" fill="#00ff00" />
<rect x="158" y="276" width="6" height="2" fill="#00ff00" />
<rect x="164" y="277" width="6" height="2" fill="#00ff00" />
<rect x="170" y="278" width="6" height="2" fill="#00ff00" />
<rect x="176" y="279" width="6" height="2" fill="#00ff00" />
<rect x="182" y="280" width="6" height="2" fill="#00ff00" />
<rect x="188" y="281" width="6" height="2" fill="#00ff00" />
<rect x="194" y="282" width="6" height="2" fill="#00ff00" />
<rect x="200" y="283" width="6" height="2" fill="#00ff00" />
<rect x="206" y="284" width="5" height="2" fill="#00ff00" />
<rect x="211" y="285" width="6" height="2" fill="#00ff00" />
<rect x="217" y="286" width="6" height="2" fill="#00ff00" />
<rect x="223" y="287" width="6" height="2" fill="#00ff00" />
<rect x="229" y="288" width="6" height="2" fill="#00ff00" />
<rect x="235" y="289" width="6" height="2" fill="#00ff00" />
<rect x="241" y="290" width="6" height="2" fill="#00ff00" />
<rect x="247" y="291" width="2" height="2" fill="#00ff00" />
<text x="0.8" y="300" fill="#808080" font-size="12" text-anchor="start" >用到未来数据</text>
<text x="262" y="297" fill="#c8c8c8" font-size="12" text-anchor="start" >6.60</text>
<path d="M249 291.5 H260 M249 291.5 l3 -3 M249 291.5 l3 3" stroke="#c8c8c8" fill="none"/>
<text x="880" y="87" fill="#c8c8c8" font-size="12" text-anchor="start" >17.29</text>
<path d="M866 78.5 l8 2 l3 -1 M866 78.5 l2 -2 M866 78.5 l0 3" stroke="#c8c8c8" fill="none"/>
<rect x="1082" y="263" width="5" height="1" fill="#c00000" />
<text x="1126" y="268" fill="#ff3c3c" font-size="12" text-anchor="end" >8.00</text>
<rect x="1082" y="243" width="3" height="1" fill="#c00000" />
<rect x="1082" y="223" width="5" height="1" fill="#c00000" />
<text x="1126" y="228" fill="#ff3c3c" font-size="12" text-anchor="end" >10.00</text>
<rect x="1082" y="203" width="3" height="1" fill="#c00000" />
<rect x="1082" y="183" width="5" height="1" fill="#c00000" />
<text x="1126" y="188" fill="#ff3c3c" font-size="12" text-anchor="end" >12.00</text>
<rect x="1082" y="163" width="3" height="1" fill="#c00000" />
<rect x="1082" y="143" width="5" height="1" fill="#c00000" />
<text x="1126" y="148" fill="#ff3c3c" font-size="12" text-anchor="end" >14.00</text>
<rect x="1082" y="123" width="3" height="1" fill="#c00000" />
<rect x="1082" y="103" width="5" height="1" fill="#c00000" />
<text x="1126" y="108" fill="#ff3c3c" font-size="12" text-anchor="end" >16.00</text>
<g shape-rendering="crispEdges">
<rect x="2" y="250" width="1" height="14" fill="#54ffff" />
<rect x="1" y="257" width="3" height="7" fill="#54ffff" />
<rect x="6" y="262" width="1" height="8" fill="#ff3232" />
<rect x="5" y="262" width="3" height="6" fill="#ff3232" />
<rect x="6" y="263" width="1" height="4" fill="#000" />
<rect x="11" y="259" width="1" height="5" fill="#ff3232" />
<rect x="10" y="260" width="3" height="4" fill="#ff3232" />
<rect x="11" y="261" width="1" height="2" fill="#000" />
<rect x="16" y="258" width="1" height="5" fill="#54ffff" />
<rect x="15" y="260" width="3" height="2" fill="#54ffff" />
<rect x="20" y="262" width="1" height="1" fill="#54ffff" />
<rect x="19" y="262" width="3" height="1" fill="#54ffff" />
<rect x="25" y="261" width="1" height="4" fill="#54ffff" />
<rect x="24" y="263" width="3" height="1" fill="#54ffff" />
<rect x="30" y="262" width="1" height="6" fill="#54ffff" />
<rect x="29" y="264" width="3" height="3" fill="#54ffff" />
<rect x="34" y="267" width="1" height="5" fill="#54ffff" />
<rect x="33" y="267" width="3" height="1" fill="#54ffff" />
<rect x="39" y="266" width="1" height="6" fill="#54ffff" />
<rect x="38" y="268" width="3" height="4" fill="#54ffff" />
<rect x="48" y="270" width="1" height="1" fill="#54ffff" />
<rect x="47" y="270" width="3" height="1" fill="#54ffff" />
<rect x="53" y="270" width="1" height="1" fill="#ff3232" />
<rect x="52" y="270" width="3" height="1" fill="#ff3232" />
<rect x="57" y="268" width="1" height="2" fill="#ff3232" />
<rect x="56" y="268" width="3" height="2" fill="#ff3232" />
<rect x="62" y="268" width="1" height="1" fill="#ff3232" />
<rect x="61" y="268" width="3" height="1" fill="#ff3232" />
<rect x="67" y="267" width="1" height="3" fill="#54ffff" />
<rect x="66" y="268" width="3" height="2" fill="#54ffff" />
<rect x="76" y="272" width="1" height="6" fill="#54ffff" />
<rect x="75" y="274" width="3" height="2" fill="#54ffff" />
<rect x="81" y="274" width="1" height="4" fill="#ff3232" />
<rect x="80" y="274" width="3" height="4" fill="#ff3232" />
<rect x="81" y="275" width="1" height="2" fill="#000" />
<rect x="85" y="272" width="1" height="2" fill="#ff3232" />
<rect x="84" y="273" width="3" height="1" fill="#ff3232" />
<rect x="90" y="273" width="1" height="1" fill="#ff3232" />
<rect x="89" y="273" width="3" height="1" fill="#ff3232" />
<rect x="95" y="272" width="1" height="2" fill="#ff3232" />
<rect x="94" y="273" width="3" height="1" fill="#ff3232" />
<rect x="99" y="272" width="1" height="2" fill="#54ffff" />
<rect x="98" y="273" width="3" height="1" fill="#54ffff" />
<rect x="104" y="272" width="1" height="3" fill="#ff3232" />
<rect x="103" y="273" width="3" height="2" fill="#ff3232" />
<rect x="109" y="272" width="1" height="2" fill="#c0c0c0" />
<rect x="108" y="273" width="3" height="1" fill="#c0c0c0" />
<rect x="112" y="274" width="3" height="1" fill="#ff3232" />
<rect x="118" y="271" width="1" height="3" fill="#ff3232" />
<rect x="117" y="271" width="3" height="3" fill="#ff3232" />
<rect x="118" y="272" width="1" height="1" fill="#000" />
<rect x="122" y="268" width="1" height="5" fill="#54ffff" />
<rect x="121" y="271" width="3" height="2" fill="#54ffff" />
<rect x="127" y="271" width="1" height="3" fill="#ff3232" />
<rect x="126" y="271" width="3" height="3" fill="#ff3232" />
<rect x="127" y="272" width="1" height="1" fill="#000" />
<rect x="141" y="267" width="1" height="1" fill="#ff3232" />
<rect x="140" y="267" width="3" height="1" fill="#ff3232" />
<rect x="146" y="265" width="1" height="3" fill="#ff3232" />
<rect x="145" y="267" width="3" height="1" fill="#ff3232" />
<rect x="150" y="265" width="1" height="2" fill="#54ffff" />
<rect x="149" y="266" width="3" height="1" fill="#54ffff" />
<rect x="155" y="266" width="1" height="2" fill="#ff3232" />
<rect x="154" y="266" width="3" height="2" fill="#ff3232" />
<rect x="160" y="266" width="1" height="2" fill="#54ffff" />
<rect x="159" y="266" width="3" height="1" fill="#54ffff" />
<rect x="164" y="266" width="1" height="4" fill="#ff3232" />
<rect x="163" y="267" width="3" height="1" fill="#ff3232" />
<rect x="173" y="263" width="1" height="4" fill="#ff3232" />
<rect x="172" y="263" width="3" height="4" fill="#ff3232" />
<rect x="173" y="264" width="1" height="2" fill="#000" />
<rect x="178" y="262" width="1" height="2" fill="#ff3232" />
<rect x="177" y="262" width="3" height="2" fill="#ff3232" />
<rect x="183" y="260" width="1" height="4" fill="#54ffff" />
<rect x="182" y="262" width="3" height="1" fill="#54ffff" />
<rect x="187" y="262" width="1" height="3" fill="#54ffff" />
<rect x="186" y="264" width="3" height="1" fill="#54ffff" />
<rect x="192" y="262" width="1" height="4" fill="#54ffff" />
<rect x="191" y="264" width="3" height="1" fill="#54ffff" />
<rect x="197" y="264" width="1" height="5" fill="#54ffff" />
<rect x="196" y="266" width="3" height="1" fill="#54ffff" />
<rect x="201" y="264" width="1" height="2" fill="#ff3232" />
<rect x="200" y="265" width="3" height="1" fill="#ff3232" />
<rect x="206" y="263" width="1" height="3" fill="#ff3232" />
<rect x="205" y="263" width="3" height="3" fill="#ff3232" />
<rect x="206" y="264" width="1" height="1" fill="#000" />
<rect x="211" y="262" width="1" height="2" fill="#ff3232" />
<rect x="210" y="262" width="3" height="2" fill="#ff3232" />
<rect x="215" y="263" width="1" height="5" fill="#54ffff" />
<rect x="214" y="263" width="3" height="2" fill="#54ffff" />
<rect x="220" y="267" width="1" height="7" fill="#54ffff" />
<rect x="219" y="267" width="3" height="4" fill="#54ffff" />
<rect x="225" y="269" width="1" height="3" fill="#ff3232" />
<rect x="224" y="269" width="3" height="3" fill="#ff3232" />
<rect x="225" y="270" width="1" height="1" fill="#000" />
<rect x="229" y="268" width="1" height="2" fill="#54ffff" />
<rect x="228" y="269" width="3" height="1" fill="#54ffff" />
<rect x="234" y="269" width="1" height="2" fill="#ff3232" />
<rect x="233" y="269" width="3" height="2" fill="#ff3232" />
<rect x="243" y="282" width="1" height="3" fill="#c0c0c0" />
<rect x="242" y="284" width="3" height="1" fill="#c0c0c0" />
<rect x="248" y="280" width="1" height="11" fill="#ff3232" />
<rect x="247" y="280" width="3" height="5" fill="#ff3232" />
<rect x="248" y="281" width="1" height="3" fill="#000" />
<rect x="252" y="277" width="1" height="4" fill="#ff3232" />
<rect x="251" y="277" width="3" height="4" fill="#ffff00" />
<rect x="257" y="276" width="1" height="5" fill="#ff3232" />
<rect x="256" y="277" width="3" height="4" fill="#ffff00" />
<rect x="262" y="270" width="1" height="7" fill="#ff3232" />
<rect x="261" y="270" width="3" height="7" fill="#ffff00" />
<rect x="266" y="266" width="1" height="4" fill="#ff3232" />
<rect x="265" y="266" width="3" height="1" fill="#ff3232" />
<rect x="271" y="265" width="1" height="4" fill="#54ffff" />
<rect x="270" y="265" width="3" height="1" fill="#54ffff" />
<rect x="276" y="264" width="1" height="4" fill="#ff3232" />
<rect x="275" y="266" width="3" height="2" fill="#ff3232" />
<rect x="280" y="263" width="1" height="3" fill="#ff3232" />
<rect x="279" y="263" width="3" height="3" fill="#ff3232" />
<rect x="280" y="264" width="1" height="1" fill="#000" />
<rect x="285" y="263" width="1" height="3" fill="#ff3232" />
<rect x="284" y="264" width="3" height="2" fill="#ff3232" />
<rect x="289" y="256" width="1" height="8" fill="#ff3232" />
<rect x="288" y="256" width="3" height="8" fill="#ff3232" />
<rect x="289" y="257" width="1" height="6" fill="#000" />
<rect x="294" y="250" width="1" height="7" fill="#ff3232" />
<rect x="293" y="250" width="3" height="7" fill="#ff3232" />
<rect x="294" y="251" width="1" height="5" fill="#000" />
<rect x="299" y="248" width="1" height="4" fill="#54ffff" />
<rect x="298" y="250" width="3" height="1" fill="#54ffff" />
<rect x="303" y="246" width="1" height="4" fill="#ff3232" />
<rect x="302" y="246" width="3" height="4" fill="#ff3232" />
<rect x="303" y="247" width="1" height="2" fill="#000" />
<rect x="308" y="240" width="1" height="8" fill="#54ffff" />
<rect x="307" y="244" width="3" height="4" fill="#54ffff" />
<rect x="313" y="248" width="1" height="7" fill="#54ffff" />
<rect x="312" y="248" width="3" height="4" fill="#54ffff" />
<rect x="317" y="246" width="1" height="7" fill="#ff3232" />
<rect x="316" y="246" width="3" height="5" fill="#ff3232" />
<rect x="317" y="247" width="1" height="3" fill="#000" />
<rect x="322" y="241" width="1" height="6" fill="#ff3232" />
<rect x="321" y="241" width="3" height="6" fill="#ff3232" />
<rect x="322" y="242" width="1" height="4" fill="#000" />
<rect x="327" y="239" width="1" height="4" fill="#54ffff" />
<rect x="326" y="240" width="3" height="2" fill="#54ffff" />
<rect x="331" y="233" width="1" height="10" fill="#ff3232" />
<rect x="330" y="233" width="3" height="9" fill="#ff3232" />
<rect x="331" y="234" width="1" height="7" fill="#000" />
<rect x="336" y="233" width="1" height="3" fill="#ff3232" />
<rect x="335" y="233" width="3" height="1" fill="#ff3232" />
<rect x="341" y="229" width="1" height="7" fill="#54ffff" />
<rect x="340" y="231" width="3" height="4" fill="#54ffff" />
<rect x="345" y="230" width="1" height="9" fill="#ff3232" />
<rect x="344" y="232" width="3" height="3" fill="#ff3232" />
<rect x="345" y="233" width="1" height="1" fill="#000" />
<rect x="350" y="231" width="1" height="4" fill="#54ffff" />
<rect x="349" y="232" width="3" height="2" fill="#54ffff" />
<rect x="354" y="229" width="1" height="7" fill="#ff3232" />
<rect x="353" y="230" width="3" height="6" fill="#ff3232" />
<rect x="354" y="231" width="1" height="4" fill="#000" />
<rect x="359" y="229" width="1" height="6" fill="#54ffff" />
<rect x="358" y="229" width="3" height="3" fill="#54ffff" />
<rect x="364" y="230" width="1" height="6" fill="#54ffff" />
<rect x="363" y="231" width="3" height="5" fill="#54ffff" />
<rect x="368" y="233" width="1" height="8" fill="#54ffff" />
<rect x="367" y="233" width="3" height="6" fill="#54ffff" />
<rect x="373" y="237" width="1" height="13" fill="#54ffff" />
<rect x="372" y="238" width="3" height="9" fill="#54ffff" />
<rect x="378" y="241" width="1" height="8" fill="#54ffff" />
<rect x="377" y="247" width="3" height="2" fill="#54ffff" />
<rect x="382" y="247" width="1" height="5" fill="#ff3232" />
<rect x="381" y="250" width="3" height="2" fill="#ffff00" />
<rect x="387" y="242" width="1" height="7" fill="#ff3232" />
<rect x="386" y="243" width="3" height="5" fill="#ff3232" />
<rect x="387" y="244" width="1" height="3" fill="#000" />
<rect x="392" y="242" width="1" height="4" fill="#54ffff" />
<rect x="391" y="244" width="3" height="2" fill="#54ffff" />
<rect x="396" y="242" width="1" height="4" fill="#ff3232" />
<rect x="395" y="244" width="3" height="2" fill="#ff3232" />
<rect x="401" y="242" width="1" height="4" fill="#54ffff" />
<rect x="400" y="244" width="3" height="1" fill="#54ffff" />
<rect x="405" y="243" width="1" height="3" fill="#ff3232" />
<rect x="404" y="243" width="3" height="3" fill="#ff3232" />
<rect x="405" y="244" width="1" height="1" fill="#000" />
<rect x="410" y="226" width="1" height="16" fill="#ff3232" />
<rect x="409" y="234" width="3" height="8" fill="#ff3232" />
<rect x="410" y="235" width="1" height="6" fill="#000" />
<rect x="415" y="229" width="1" height="9" fill="#ff3232" />
<rect x="414" y="235" width="3" height="3" fill="#ff3232" />
<rect x="415" y="236" width="1" height="1" fill="#000" />
<rect x="419" y="232" width="1" height="4" fill="#ff3232" />
<rect x="418" y="233" width="3" height="3" fill="#ff3232" />
<rect x="419" y="234" width="1" height="1" fill="#000" />
<rect x="424" y="232" width="1" height="3" fill="#ff3232" />
<rect x="423" y="232" width="3" height="1" fill="#ff3232" />
<rect x="429" y="231" width="1" height="8" fill="#54ffff" />
<rect x="428" y="231" width="3" height="4" fill="#54ffff" />
<rect x="433" y="233" width="1" height="3" fill="#54ffff" />
<rect x="432" y="234" width="3" height="2" fill="#54ffff" />
<rect x="438" y="235" width="1" height="2" fill="#54ffff" />
<rect x="437" y="236" width="3" height="1" fill="#54ffff" />
<rect x="443" y="235" width="1" height="5" fill="#54ffff" />
<rect x="442" y="236" width="3" height="2" fill="#54ffff" />
<rect x="447" y="232" width="1" height="8" fill="#ff3232" />
<rect x="446" y="232" width="3" height="8" fill="#ff3232" />
<rect x="447" y="233" width="1" height="6" fill="#000" />
<rect x="452" y="231" width="1" height="10" fill="#54ffff" />
<rect x="451" y="232" width="3" height="7" fill="#54ffff" />
<rect x="456" y="238" width="1" height="4" fill="#c0c0c0" />
<rect x="455" y="240" width="3" height="1" fill="#c0c0c0" />
<rect x="461" y="238" width="1" height="3" fill="#54ffff" />
<rect x="460" y="240" width="3" height="1" fill="#54ffff" />
<rect x="466" y="240" width="1" height="2" fill="#54ffff" />
<rect x="465" y="240" width="3" height="2" fill="#54ffff" />
<rect x="470" y="240" width="1" height="8" fill="#ff3232" />
<rect x="469" y="244" width="3" height="4" fill="#ffff00" />
<rect x="475" y="236" width="1" height="4" fill="#ff3232" />
<rect x="474" y="236" width="3" height="4" fill="#ff3232" />
<rect x="475" y="237" width="1" height="2" fill="#000" />
<rect x="480" y="235" width="1" height="4" fill="#54ffff" />
<rect x="479" y="235" width="3" height="4" fill="#54ffff" />
<rect x="484" y="235" width="1" height="4" fill="#54ffff" />
<rect x="483" y="237" width="3" height="2" fill="#54ffff" />
<rect x="489" y="236" width="1" height="3" fill="#ff3232" />
<rect x="488" y="236" width="3" height="3" fill="#ff3232" />
<rect x="489" y="237" width="1" height="1" fill="#000" />
<rect x="494" y="233" width="1" height="3" fill="#ff3232" />
<rect x="493" y="234" width="3" height="2" fill="#ff3232" />
<rect x="498" y="227" width="1" height="7" fill="#ff3232" />
<rect x="497" y="229" width="3" height="4" fill="#ff3232" />
<rect x="498" y="230" width="1" height="2" fill="#000" />
<rect x="503" y="227" width="1" height="4" fill="#54ffff" />
<rect x="502" y="228" width="3" height="1" fill="#54ffff" />
<rect x="508" y="227" width="1" height="3" fill="#ff3232" />
<rect x="507" y="229" width="3" height="1" fill="#ff3232" />
<rect x="512" y="229" width="1" height="3" fill="#54ffff" />
<rect x="511" y="229" width="3" height="1" fill="#54ffff" />
<rect x="517" y="225" width="1" height="4" fill="#ff3232" />
<rect x="516" y="225" width="3" height="4" fill="#ff3232" />
<rect x="517" y="226" width="1" height="2" fill="#000" />
<rect x="521" y="224" width="1" height="3" fill="#54ffff" />
<rect x="520" y="225" width="3" height="2" fill="#54ffff" />
<rect x="526" y="225" width="1" height="4" fill="#54ffff" />
<rect x="525" y="226" width="3" height="3" fill="#54ffff" />
<rect x="531" y="222" width="1" height="8" fill="#ff3232" />
<rect x="530" y="222" width="3" height="8" fill="#ff3232" />
<rect x="531" y="223" width="1" height="6" fill="#000" />
<rect x="535" y="218" width="1" height="8" fill="#c0c0c0" />
<rect x="534" y="222" width="3" height="1" fill="#c0c0c0" />
<rect x="540" y="220" width="1" height="11" fill="#ff3232" />
<rect x="539" y="221" width="3" height="3" fill="#ff3232" />
<rect x="540" y="222" width="1" height="1" fill="#000" />
<rect x="545" y="220" width="1" height="7" fill="#54ffff" />
<rect x="544" y="221" width="3" height="5" fill="#54ffff" />
<rect x="549" y="224" width="1" height="3" fill="#ff3232" />
<rect x="548" y="225" width="3" height="2" fill="#ff3232" />
<rect x="554" y="222" width="1" height="6" fill="#c0c0c0" />
<rect x="553" y="227" width="3" height="1" fill="#c0c0c0" />
<rect x="559" y="224" width="1" height="3" fill="#54ffff" />
<rect x="558" y="225" width="3" height="1" fill="#54ffff" />
<rect x="563" y="221" width="1" height="4" fill="#54ffff" />
<rect x="562" y="223" width="3" height="1" fill="#54ffff" />
<rect x="568" y="223" width="1" height="4" fill="#54ffff" />
<rect x="567" y="223" width="3" height="2" fill="#54ffff" />
<rect x="572" y="224" width="1" height="4" fill="#54ffff" />
<rect x="571" y="226" width="3" height="2" fill="#54ffff" />
<rect x="577" y="226" width="1" height="3" fill="#54ffff" />
<rect x="576" y="228" width="3" height="1" fill="#54ffff" />
<rect x="582" y="227" width="1" height="2" fill="#ff3232" />
<rect x="581" y="227" width="3" height="2" fill="#ff3232" />
<rect x="586" y="221" width="1" height="6" fill="#ff3232" />
<rect x="585" y="223" width="3" height="4" fill="#ff3232" />
<rect x="586" y="224" width="1" height="2" fill="#000" />
<rect x="591" y="221" width="1" height="8" fill="#54ffff" />
<rect x="590" y="222" width="3" height="6" fill="#54ffff" />
<rect x="596" y="227" width="1" height="2" fill="#ff3232" />
<rect x="595" y="227" width="3" height="2" fill="#ff3232" />
<rect x="600" y="226" width="1" height="6" fill="#54ffff" />
<rect x="599" y="227" width="3" height="5" fill="#54ffff" />
<rect x="605" y="229" width="1" height="3" fill="#ff3232" />
<rect x="604" y="230" width="3" height="2" fill="#ff3232" />
<rect x="610" y="226" width="1" height="6" fill="#ff3232" />
<rect x="609" y="226" width="3" height="6" fill="#ff3232" />
<rect x="610" y="227" width="1" height="4" fill="#000" />
<rect x="614" y="223" width="1" height="4" fill="#ff3232" />
<rect x="613" y="223" width="3" height="4" fill="#ff3232" />
<rect x="614" y="224" width="1" height="2" fill="#000" />
<rect x="619" y="222" width="1" height="5" fill="#54ffff" />
<rect x="618" y="223" width="3" height="1" fill="#54ffff" />
<rect x="624" y="223" width="1" height="3" fill="#54ffff" />
<rect x="623" y="223" width="3" height="1" fill="#54ffff" />
<rect x="628" y="224" width="1" height="4" fill="#ff3232" />
<rect x="627" y="224" width="3" height="1" fill="#ff3232" />
<rect x="633" y="220" width="1" height="5" fill="#ff3232" />
<rect x="632" y="220" width="3" height="4" fill="#ff3232" />
<rect x="633" y="221" width="1" height="2" fill="#000" />
<rect x="637" y="218" width="1" height="3" fill="#ff3232" />
<rect x="636" y="220" width="3" height="1" fill="#ff3232" />
<rect x="642" y="217" width="1" height="8" fill="#54ffff" />
<rect x="641" y="217" width="3" height="8" fill="#54ffff" />
<rect x="647" y="223" width="1" height="6" fill="#54ffff" />
<rect x="646" y="224" width="3" height="5" fill="#54ffff" />
<rect x="651" y="227" width="1" height="2" fill="#54ffff" />
<rect x="650" y="228" width="3" height="1" fill="#54ffff" />
<rect x="656" y="226" width="1" height="6" fill="#54ffff" />
<rect x="655" y="230" width="3" height="1" fill="#54ffff" />
<rect x="661" y="230" width="1" height="3" fill="#ff3232" />
<rect x="660" y="230" width="3" height="3" fill="#ff3232" />
<rect x="661" y="231" width="1" height="1" fill="#000" />
<rect x="665" y="226" width="1" height="2" fill="#ff3232" />
<rect x="664" y="226" width="3" height="2" fill="#ff3232" />
<rect x="670" y="224" width="1" height="2" fill="#ff3232" />
<rect x="669" y="224" width="3" height="2" fill="#ff3232" />
<rect x="675" y="224" width="1" height="4" fill="#54ffff" />
<rect x="674" y="224" width="3" height="4" fill="#54ffff" />
<rect x="679" y="225" width="1" height="2" fill="#c0c0c0" />
<rect x="678" y="226" width="3" height="1" fill="#c0c0c0" />
<rect x="684" y="223" width="1" height="7" fill="#ff3232" />
<rect x="683" y="225" width="3" height="3" fill="#ff3232" />
<rect x="684" y="226" width="1" height="1" fill="#000" />
<rect x="688" y="225" width="1" height="9" fill="#54ffff" />
<rect x="687" y="225" width="3" height="9" fill="#54ffff" />
<rect x="693" y="231" width="1" height="13" fill="#54ffff" />
<rect x="692" y="236" width="3" height="4" fill="#54ffff" />
<rect x="698" y="237" width="1" height="3" fill="#54ffff" />
<rect x="697" y="238" width="3" height="2" fill="#54ffff" />
<rect x="702" y="236" width="1" height="5" fill="#ff3232" />
<rect x="701" y="238" width="3" height="3" fill="#ff3232" />
<rect x="702" y="239" width="1" height="1" fill="#000" />
<rect x="707" y="237" width="1" height="4" fill="#54ffff" />
<rect x="706" y="238" width="3" height="1" fill="#54ffff" />
<rect x="712" y="236" width="1" height="7" fill="#54ffff" />
<rect x="711" y="239" width="3" height="1" fill="#54ffff" />
<rect x="716" y="237" width="1" height="5" fill="#ff3232" />
<rect x="715" y="239" width="3" height="3" fill="#ff3232" />
<rect x="716" y="240" width="1" height="1" fill="#000" />
<rect x="721" y="237" width="1" height="4" fill="#ff3232" />
<rect x="720" y="238" width="3" height="3" fill="#ff3232" />
<rect x="721" y="239" width="1" height="1" fill="#000" />
<rect x="724" y="218" width="5" height="19" fill="#ff00ff" />
<rect x="730" y="198" width="1" height="31" fill="#54ffff" />
<rect x="729" y="198" width="3" height="19" fill="#54ffff" />
<rect x="735" y="226" width="1" height="8" fill="#ff3232" />
<rect x="734" y="226" width="3" height="8" fill="#ff3232" />
<rect x="735" y="227" width="1" height="6" fill="#000" />
<rect x="739" y="224" width="1" height="8" fill="#54ffff" />
<rect x="738" y="226" width="3" height="2" fill="#54ffff" />
<rect x="744" y="209" width="1" height="24" fill="#ff3232" />
<rect x="743" y="219" width="3" height="11" fill="#ff3232" />
<rect x="744" y="220" width="1" height="9" fill="#000" />
<rect x="749" y="216" width="1" height="8" fill="#54ffff" />
<rect x="748" y="222" width="3" height="1" fill="#54ffff" />
<rect x="753" y="222" width="1" height="4" fill="#54ffff" />
<rect x="752" y="222" width="3" height="2" fill="#54ffff" />
<rect x="758" y="222" width="1" height="3" fill="#ff3232" />
<rect x="757" y="224" width="3" height="1" fill="#ff3232" />
<rect x="763" y="224" width="1" height="11" fill="#54ffff" />
<rect x="762" y="225" width="3" height="7" fill="#54ffff" />
<rect x="767" y="233" width="1" height="6" fill="#54ffff" />
<rect x="766" y="234" width="3" height="4" fill="#54ffff" />
<rect x="772" y="236" width="1" height="4" fill="#54ffff" />
<rect x="771" y="238" width="3" height="2" fill="#54ffff" />
<rect x="777" y="236" width="1" height="5" fill="#ff3232" />
<rect x="776" y="239" width="3" height="2" fill="#ffff00" />
<rect x="781" y="235" width="1" height="4" fill="#ff3232" />
<rect x="780" y="235" width="3" height="4" fill="#ff3232" />
<rect x="781" y="236" width="1" height="2" fill="#000" />
<rect x="786" y="233" width="1" height="4" fill="#54ffff" />
<rect x="785" y="236" width="3" height="1" fill="#54ffff" />
<rect x="791" y="235" width="1" height="5" fill="#ff3232" />
<rect x="790" y="235" width="3" height="5" fill="#ffff00" />
<rect x="793" y="220" width="5" height="20" fill="#ff00ff" />
<rect x="800" y="209" width="1" height="20" fill="#54ffff" />
<rect x="799" y="209" width="3" height="16" fill="#54ffff" />
<rect x="804" y="221" width="1" height="10" fill="#54ffff" />
<rect x="803" y="229" width="3" height="2" fill="#54ffff" />
<rect x="809" y="222" width="1" height="4" fill="#54ffff" />
<rect x="808" y="224" width="3" height="2" fill="#54ffff" />
<rect x="814" y="222" width="1" height="12" fill="#ff3232" />
<rect x="813" y="228" width="3" height="4" fill="#ffff00" />
<rect x="818" y="215" width="1" height="11" fill="#ff3232" />
<rect x="817" y="218" width="3" height="5" fill="#ff3232" />
<rect x="818" y="219" width="1" height="3" fill="#000" />
<rect x="823" y="214" width="1" height="4" fill="#ff3232" />
<rect x="822" y="214" width="3" height="4" fill="#ff3232" />
<rect x="823" y="215" width="1" height="2" fill="#000" />
<rect x="828" y="212" width="1" height="7" fill="#54ffff" />
<rect x="827" y="214" width="3" height="4" fill="#54ffff" />
<rect x="832" y="214" width="1" height="4" fill="#ff3232" />
<rect x="831" y="216" width="3" height="2" fill="#ff3232" />
<rect x="837" y="213" width="1" height="5" fill="#ff3232" />
<rect x="836" y="213" width="3" height="5" fill="#ff3232" />
<rect x="837" y="214" width="1" height="3" fill="#000" />
<rect x="840" y="192" width="5" height="22" fill="#ff00ff" />
<rect x="844" y="169" width="5" height="32" fill="#ff00ff" />
<rect x="849" y="143" width="5" height="26" fill="#ff00ff" />
<rect x="855" y="135" width="1" height="7" fill="#ff3232" />
<rect x="853" y="115" width="5" height="20" fill="#ff00ff" />
<rect x="860" y="102" width="1" height="38" fill="#ff3232" />
<rect x="858" y="84" width="5" height="18" fill="#ff00ff" />
<rect x="865" y="79" width="1" height="39" fill="#54ffff" />
<rect x="864" y="83" width="3" height="30" fill="#54ffff" />
<rect x="869" y="99" width="1" height="45" fill="#54ffff" />
<rect x="868" y="106" width="3" height="38" fill="#54ffff" />
<rect x="874" y="148" width="1" height="24" fill="#54ffff" />
<rect x="873" y="152" width="3" height="20" fill="#54ffff" />
<rect x="879" y="174" width="1" height="10" fill="#54ffff" />
<rect x="878" y="178" width="3" height="4" fill="#54ffff" />
<rect x="883" y="172" width="1" height="12" fill="#ff3232" />
<rect x="882" y="176" width="3" height="8" fill="#ff3232" />
<rect x="883" y="177" width="1" height="6" fill="#000" />
<rect x="888" y="174" width="1" height="8" fill="#ff3232" />
<rect x="887" y="177" width="3" height="3" fill="#ff3232" />
<rect x="888" y="178" width="1" height="1" fill="#000" />
<rect x="893" y="166" width="1" height="16" fill="#ff3232" />
<rect x="892" y="169" width="3" height="12" fill="#ff3232" />
<rect x="893" y="170" width="1" height="10" fill="#000" />
<rect x="897" y="171" width="1" height="8" fill="#54ffff" />
<rect x="896" y="172" width="3" height="6" fill="#54ffff" />
<rect x="902" y="162" width="1" height="20" fill="#ff3232" />
<rect x="901" y="172" width="3" height="6" fill="#ff3232" />
<rect x="902" y="173" width="1" height="4" fill="#000" />
<rect x="907" y="160" width="1" height="13" fill="#54ffff" />
<rect x="906" y="164" width="3" height="6" fill="#54ffff" />
<rect x="911" y="148" width="1" height="29" fill="#ff3232" />
<rect x="910" y="160" width="3" height="14" fill="#ff3232" />
<rect x="911" y="161" width="1" height="12" fill="#000" />
<rect x="916" y="156" width="1" height="10" fill="#ff3232" />
<rect x="915" y="156" width="3" height="4" fill="#ff3232" />
<rect x="916" y="157" width="1" height="2" fill="#000" />
<rect x="920" y="130" width="1" height="30" fill="#ff3232" />
<rect x="919" y="138" width="3" height="19" fill="#ff3232" />
<rect x="920" y="139" width="1" height="17" fill="#000" />
<rect x="925" y="108" width="1" height="36" fill="#54ffff" />
<rect x="924" y="123" width="3" height="19" fill="#54ffff" />
<rect x="930" y="133" width="1" height="27" fill="#54ffff" />
<rect x="929" y="141" width="3" height="10" fill="#54ffff" />
<rect x="934" y="149" width="1" height="23" fill="#54ffff" />
<rect x="933" y="157" width="3" height="12" fill="#54ffff" />
<rect x="939" y="165" width="1" height="13" fill="#ff3232" />
<rect x="938" y="175" width="3" height="1" fill="#ff3232" />
<rect x="944" y="172" width="1" height="11" fill="#54ffff" />
<rect x="943" y="174" width="3" height="9" fill="#54ffff" />
<rect x="948" y="185" width="1" height="12" fill="#54ffff" />
<rect x="947" y="187" width="3" height="8" fill="#54ffff" />
<rect x="953" y="192" width="1" height="9" fill="#54ffff" />
<rect x="952" y="193" width="3" height="6" fill="#54ffff" />
<rect x="958" y="182" width="1" height="17" fill="#ff3232" />
<rect x="957" y="186" width="3" height="10" fill="#ff3232" />
<rect x="958" y="187" width="1" height="8" fill="#000" />
<rect x="962" y="180" width="1" height="8" fill="#54ffff" />
<rect x="961" y="186" width="3" height="2" fill="#54ffff" />
<rect x="967" y="185" width="1" height="6" fill="#ff3232" />
<rect x="966" y="187" width="3" height="1" fill="#ff3232" />
<rect x="971" y="168" width="1" height="18" fill="#ff3232" />
<rect x="970" y="179" width="3" height="7" fill="#ff3232" />
<rect x="971" y="180" width="1" height="5" fill="#000" />
<rect x="976" y="178" width="1" height="7" fill="#54ffff" />
<rect x="975" y="180" width="3" height="5" fill="#54ffff" />
<rect x="981" y="185" width="1" height="7" fill="#54ffff" />
<rect x="980" y="185" width="3" height="1" fill="#54ffff" />
<rect x="985" y="187" width="1" height="14" fill="#54ffff" />
<rect x="984" y="187" width="3" height="6" fill="#54ffff" />
<rect x="990" y="187" width="1" height="14" fill="#ff3232" />
<rect x="989" y="190" width="3" height="5" fill="#ff3232" />
<rect x="990" y="191" width="1" height="3" fill="#000" />
<rect x="995" y="186" width="1" height="8" fill="#54ffff" />
<rect x="994" y="186" width="3" height="5" fill="#54ffff" />
<rect x="999" y="188" width="1" height="3" fill="#54ffff" />
<rect x="998" y="190" width="3" height="1" fill="#54ffff" />
<rect x="1004" y="188" width="1" height="8" fill="#54ffff" />
<rect x="1003" y="188" width="3" height="8" fill="#54ffff" />
<rect x="1009" y="174" width="1" height="24" fill="#ff3232" />
<rect x="1008" y="185" width="3" height="13" fill="#ff3232" />
<rect x="1009" y="186" width="1" height="11" fill="#000" />
<rect x="1013" y="182" width="1" height="11" fill="#54ffff" />
<rect x="1012" y="183" width="3" height="10" fill="#54ffff" />
<rect x="1018" y="190" width="1" height="10" fill="#54ffff" />
<rect x="1017" y="193" width="3" height="7" fill="#54ffff" />
<rect x="1023" y="180" width="1" height="23" fill="#ff3232" />
<rect x="1022" y="190" width="3" height="11" fill="#ff3232" />
<rect x="1023" y="191" width="1" height="9" fill="#000" />
<rect x="1027" y="187" width="1" height="11" fill="#54ffff" />
<rect x="1026" y="190" width="3" height="7" fill="#54ffff" />
<rect x="1032" y="185" width="1" height="14" fill="#ff3232" />
<rect x="1031" y="192" width="3" height="4" fill="#ff3232" />
<rect x="1032" y="193" width="1" height="2" fill="#000" />
<rect x="1037" y="176" width="1" height="16" fill="#ff3232" />
<rect x="1036" y="186" width="3" height="6" fill="#ff3232" />
<rect x="1037" y="187" width="1" height="4" fill="#000" />
<rect x="1041" y="187" width="1" height="2" fill="#ff3232" />
<rect x="1039" y="162" width="5" height="25" fill="#ff00ff" />
<rect x="1046" y="150" width="1" height="18" fill="#ff3232" />
<rect x="1045" y="150" width="3" height="12" fill="#ff3232" />
<rect x="1046" y="151" width="1" height="10" fill="#000" />
<rect x="1050" y="135" width="1" height="28" fill="#ff3232" />
<rect x="1049" y="145" width="3" height="14" fill="#ff3232" />
<rect x="1050" y="146" width="1" height="12" fill="#000" />
<rect x="1055" y="127" width="1" height="22" fill="#ff3232" />
<rect x="1054" y="142" width="3" height="1" fill="#ff3232" />
<rect x="1060" y="138" width="1" height="17" fill="#ff3232" />
<rect x="1059" y="141" width="3" height="13" fill="#ff3232" />
<rect x="1060" y="142" width="1" height="11" fill="#000" />
<rect x="1064" y="128" width="1" height="18" fill="#ff3232" />
<rect x="1063" y="131" width="3" height="9" fill="#ff3232" />
<rect x="1064" y="132" width="1" height="7" fill="#000" />
</g>
<circle cx="8" cy="324" r="6" fill="#8c8c8c"/>
<path d="M5.5 323 L8 325.8 L10.5 323" fill="none" stroke="#000" stroke-width="1.3"/>
<text x="18.5" y="328" fill="#c8c8c8" font-size="12" text-anchor="start" >CHO资金入场 AAA: 1035.98</text>
<text x="175.5" y="328" fill="#00ffff" font-size="12" text-anchor="start" >: 0.00</text>
<text x="0.8" y="508" fill="#808080" font-size="12" text-anchor="start" >用到未来数据</text>
<g shape-rendering="crispEdges">
<rect x="2" y="406" width="859" height="2" fill="#00ffff" />
<rect x="864" y="407" width="1" height="1" fill="#00ffff" />
<rect x="869" y="407" width="1" height="1" fill="#00ffff" />
<rect x="874" y="407" width="1" height="1" fill="#00ffff" />
<rect x="879" y="407" width="1" height="1" fill="#00ffff" />
<rect x="884" y="407" width="1" height="1" fill="#00ffff" />
<rect x="888" y="407" width="1" height="1" fill="#00ffff" />
<rect x="893" y="407" width="1" height="1" fill="#00ffff" />
<rect x="898" y="407" width="1" height="1" fill="#00ffff" />
<rect x="902" y="407" width="1" height="1" fill="#00ffff" />
<rect x="907" y="407" width="1" height="1" fill="#00ffff" />
<rect x="912" y="407" width="1" height="1" fill="#00ffff" />
<rect x="917" y="407" width="1" height="1" fill="#00ffff" />
<rect x="922" y="407" width="1" height="1" fill="#00ffff" />
<rect x="926" y="407" width="1" height="1" fill="#00ffff" />
<rect x="931" y="407" width="1" height="1" fill="#00ffff" />
<rect x="936" y="407" width="1" height="1" fill="#00ffff" />
<rect x="940" y="407" width="1" height="1" fill="#00ffff" />
<rect x="945" y="407" width="1" height="1" fill="#00ffff" />
<rect x="950" y="407" width="1" height="1" fill="#00ffff" />
<rect x="955" y="407" width="1" height="1" fill="#00ffff" />
<rect x="960" y="407" width="1" height="1" fill="#00ffff" />
<rect x="964" y="407" width="1" height="1" fill="#00ffff" />
<rect x="969" y="407" width="1" height="1" fill="#00ffff" />
<rect x="974" y="407" width="1" height="1" fill="#00ffff" />
<rect x="978" y="407" width="1" height="1" fill="#00ffff" />
<rect x="983" y="407" width="1" height="1" fill="#00ffff" />
<rect x="988" y="407" width="1" height="1" fill="#00ffff" />
<rect x="993" y="407" width="1" height="1" fill="#00ffff" />
<rect x="998" y="407" width="1" height="1" fill="#00ffff" />
<rect x="1002" y="407" width="1" height="1" fill="#00ffff" />
<rect x="1007" y="407" width="1" height="1" fill="#00ffff" />
<rect x="1012" y="407" width="1" height="1" fill="#00ffff" />
<rect x="1016" y="407" width="1" height="1" fill="#00ffff" />
<rect x="1021" y="407" width="1" height="1" fill="#00ffff" />
<rect x="1026" y="407" width="1" height="1" fill="#00ffff" />
<rect x="1031" y="407" width="1" height="1" fill="#00ffff" />
<rect x="1036" y="407" width="1" height="1" fill="#00ffff" />
<rect x="1040" y="407" width="1" height="1" fill="#00ffff" />
<rect x="1045" y="407" width="1" height="1" fill="#00ffff" />
<rect x="1050" y="407" width="1" height="1" fill="#00ffff" />
<rect x="1054" y="407" width="1" height="1" fill="#00ffff" />
<rect x="1059" y="407" width="1" height="1" fill="#00ffff" />
<rect x="1064" y="407" width="1" height="1" fill="#00ffff" />
<rect x="2" y="412" width="1" height="1" fill="#fff" />
<rect x="7" y="413" width="1" height="1" fill="#fff" />
<rect x="12" y="414" width="1" height="1" fill="#fff" />
<rect x="16" y="414" width="1" height="1" fill="#fff" />
<rect x="21" y="415" width="1" height="1" fill="#fff" />
<rect x="26" y="416" width="1" height="1" fill="#fff" />
<rect x="30" y="416" width="1" height="1" fill="#fff" />
<rect x="35" y="417" width="1" height="1" fill="#fff" />
<rect x="40" y="417" width="1" height="1" fill="#fff" />
<rect x="45" y="417" width="1" height="1" fill="#fff" />
<rect x="50" y="417" width="1" height="1" fill="#fff" />
<rect x="54" y="417" width="1" height="1" fill="#fff" />
<rect x="59" y="417" width="1" height="1" fill="#fff" />
<rect x="64" y="417" width="1" height="1" fill="#fff" />
<rect x="68" y="417" width="1" height="1" fill="#fff" />
<rect x="73" y="417" width="1" height="1" fill="#fff" />
<rect x="78" y="417" width="1" height="1" fill="#fff" />
<rect x="83" y="417" width="1" height="1" fill="#fff" />
<rect x="88" y="417" width="1" height="1" fill="#fff" />
<rect x="92" y="416" width="1" height="1" fill="#fff" />
<rect x="97" y="416" width="1" height="1" fill="#fff" />
<rect x="102" y="416" width="1" height="1" fill="#fff" />
<rect x="106" y="415" width="1" height="1" fill="#fff" />
<rect x="111" y="415" width="1" height="1" fill="#fff" />
<rect x="116" y="415" width="1" height="1" fill="#fff" />
<rect x="121" y="414" width="1" height="1" fill="#fff" />
<rect x="126" y="414" width="1" height="1" fill="#fff" />
<rect x="130" y="414" width="1" height="1" fill="#fff" />
<rect x="135" y="413" width="1" height="1" fill="#fff" />
<rect x="140" y="413" width="1" height="1" fill="#fff" />
<rect x="144" y="413" width="1" height="1" fill="#fff" />
<rect x="149" y="413" width="1" height="1" fill="#fff" />
<rect x="154" y="412" width="1" height="1" fill="#fff" />
<rect x="159" y="412" width="1" height="1" fill="#fff" />
<rect x="164" y="412" width="1" height="1" fill="#fff" />
<rect x="168" y="412" width="1" height="1" fill="#fff" />
<rect x="173" y="412" width="1" height="1" fill="#fff" />
<rect x="178" y="411" width="1" height="1" fill="#fff" />
<rect x="182" y="411" width="1" height="1" fill="#fff" />
<rect x="187" y="411" width="1" height="1" fill="#fff" />
<rect x="192" y="411" width="1" height="1" fill="#fff" />
<rect x="197" y="411" width="1" height="1" fill="#fff" />
<rect x="202" y="411" width="1" height="1" fill="#fff" />
<rect x="206" y="411" width="1" height="1" fill="#fff" />
<rect x="211" y="411" width="1" height="1" fill="#fff" />
<rect x="216" y="411" width="1" height="1" fill="#fff" />
<rect x="220" y="411" width="1" height="1" fill="#fff" />
<rect x="225" y="411" width="1" height="1" fill="#fff" />
<rect x="230" y="411" width="1" height="1" fill="#fff" />
<rect x="235" y="411" width="1" height="1" fill="#fff" />
<rect x="240" y="411" width="1" height="1" fill="#fff" />
<rect x="244" y="411" width="1" height="1" fill="#fff" />
<rect x="249" y="410" width="1" height="1" fill="#fff" />
<rect x="254" y="410" width="1" height="1" fill="#fff" />
<rect x="258" y="410" width="1" height="1" fill="#fff" />
<rect x="263" y="410" width="1" height="1" fill="#fff" />
<rect x="268" y="410" width="1" height="1" fill="#fff" />
<rect x="273" y="409" width="1" height="1" fill="#fff" />
<rect x="278" y="409" width="1" height="1" fill="#fff" />
<rect x="282" y="409" width="1" height="1" fill="#fff" />
<rect x="366" y="409" width="1" height="1" fill="#fff" />
<rect x="371" y="410" width="1" height="1" fill="#fff" />
<rect x="376" y="411" width="1" height="1" fill="#fff" />
<rect x="380" y="412" width="1" height="1" fill="#fff" />
<rect x="385" y="414" width="1" height="1" fill="#fff" />
<rect x="390" y="415" width="1" height="1" fill="#fff" />
<rect x="394" y="417" width="1" height="1" fill="#fff" />
<rect x="399" y="419" width="1" height="1" fill="#fff" />
<rect x="404" y="420" width="1" height="1" fill="#fff" />
<rect x="409" y="420" width="1" height="1" fill="#fff" />
<rect x="414" y="421" width="1" height="1" fill="#fff" />
<rect x="418" y="422" width="1" height="1" fill="#fff" />
<rect x="423" y="423" width="1" height="1" fill="#fff" />
<rect x="428" y="424" width="1" height="1" fill="#fff" />
<rect x="432" y="424" width="1" height="1" fill="#fff" />
<rect x="437" y="424" width="1" height="1" fill="#fff" />
<rect x="442" y="424" width="1" height="1" fill="#fff" />
<rect x="447" y="424" width="1" height="1" fill="#fff" />
<rect x="452" y="424" width="1" height="1" fill="#fff" />
<rect x="456" y="423" width="1" height="1" fill="#fff" />
<rect x="461" y="422" width="1" height="1" fill="#fff" />
<rect x="466" y="422" width="1" height="1" fill="#fff" />
<rect x="470" y="421" width="1" height="1" fill="#fff" />
<rect x="475" y="420" width="1" height="1" fill="#fff" />
<rect x="480" y="420" width="1" height="1" fill="#fff" />
<rect x="485" y="419" width="1" height="1" fill="#fff" />
<rect x="490" y="418" width="1" height="1" fill="#fff" />
<rect x="494" y="417" width="1" height="1" fill="#fff" />
<rect x="499" y="416" width="1" height="1" fill="#fff" />
<rect x="504" y="416" width="1" height="1" fill="#fff" />
<rect x="508" y="415" width="1" height="1" fill="#fff" />
<rect x="513" y="414" width="1" height="1" fill="#fff" />
<rect x="518" y="413" width="1" height="1" fill="#fff" />
<rect x="523" y="413" width="1" height="1" fill="#fff" />
<rect x="528" y="412" width="1" height="1" fill="#fff" />
<rect x="532" y="412" width="1" height="1" fill="#fff" />
<rect x="537" y="411" width="1" height="1" fill="#fff" />
<rect x="542" y="411" width="1" height="1" fill="#fff" />
<rect x="546" y="411" width="1" height="1" fill="#fff" />
<rect x="551" y="410" width="1" height="1" fill="#fff" />
<rect x="556" y="410" width="1" height="1" fill="#fff" />
<rect x="561" y="410" width="1" height="1" fill="#fff" />
<rect x="566" y="410" width="1" height="1" fill="#fff" />
<rect x="570" y="410" width="1" height="1" fill="#fff" />
<rect x="575" y="410" width="1" height="1" fill="#fff" />
<rect x="580" y="411" width="1" height="1" fill="#fff" />
<rect x="584" y="411" width="1" height="1" fill="#fff" />
<rect x="589" y="411" width="1" height="1" fill="#fff" />
<rect x="594" y="412" width="1" height="1" fill="#fff" />
<rect x="599" y="412" width="1" height="1" fill="#fff" />
<rect x="604" y="412" width="1" height="1" fill="#fff" />
<rect x="608" y="412" width="1" height="1" fill="#fff" />
<rect x="613" y="412" width="1" height="1" fill="#fff" />
<rect x="618" y="413" width="1" height="1" fill="#fff" />
<rect x="622" y="413" width="1" height="1" fill="#fff" />
<rect x="627" y="413" width="1" height="1" fill="#fff" />
<rect x="632" y="413" width="1" height="1" fill="#fff" />
<rect x="637" y="413" width="1" height="1" fill="#fff" />
<rect x="642" y="414" width="1" height="1" fill="#fff" />
<rect x="646" y="414" width="1" height="1" fill="#fff" />
<rect x="651" y="414" width="1" height="1" fill="#fff" />
<rect x="656" y="414" width="1" height="1" fill="#fff" />
<rect x="660" y="414" width="1" height="1" fill="#fff" />
<rect x="665" y="415" width="1" height="1" fill="#fff" />
<rect x="670" y="415" width="1" height="1" fill="#fff" />
<rect x="675" y="416" width="1" height="1" fill="#fff" />
<rect x="680" y="416" width="1" height="1" fill="#fff" />
<rect x="684" y="416" width="1" height="1" fill="#fff" />
<rect x="689" y="417" width="1" height="1" fill="#fff" />
<rect x="694" y="417" width="1" height="1" fill="#fff" />
<rect x="698" y="417" width="1" height="1" fill="#fff" />
<rect x="703" y="418" width="1" height="1" fill="#fff" />
<rect x="708" y="418" width="1" height="1" fill="#fff" />
<rect x="713" y="419" width="1" height="1" fill="#fff" />
<rect x="718" y="419" width="1" height="1" fill="#fff" />
<rect x="722" y="419" width="1" height="1" fill="#fff" />
<rect x="727" y="420" width="1" height="1" fill="#fff" />
<rect x="732" y="420" width="1" height="1" fill="#fff" />
<rect x="736" y="420" width="1" height="1" fill="#fff" />
<rect x="741" y="421" width="1" height="1" fill="#fff" />
<rect x="746" y="422" width="1" height="1" fill="#fff" />
<rect x="751" y="422" width="1" height="1" fill="#fff" />
<rect x="756" y="423" width="1" height="1" fill="#fff" />
<rect x="760" y="424" width="1" height="1" fill="#fff" />
<rect x="765" y="425" width="1" height="1" fill="#fff" />
<rect x="770" y="426" width="1" height="1" fill="#fff" />
<rect x="774" y="426" width="1" height="1" fill="#fff" />
<rect x="779" y="427" width="1" height="1" fill="#fff" />
<rect x="784" y="428" width="1" height="1" fill="#fff" />
<rect x="789" y="429" width="1" height="1" fill="#fff" />
<rect x="794" y="429" width="1" height="1" fill="#fff" />
<rect x="798" y="430" width="1" height="1" fill="#fff" />
<rect x="803" y="429" width="1" height="1" fill="#fff" />
<rect x="808" y="427" width="1" height="1" fill="#fff" />
<rect x="812" y="426" width="1" height="1" fill="#fff" />
<rect x="817" y="425" width="1" height="1" fill="#fff" />
<rect x="822" y="422" width="1" height="1" fill="#fff" />
<rect x="827" y="419" width="1" height="1" fill="#fff" />
<rect x="832" y="412" width="1" height="1" fill="#fff" />
<rect x="865" y="340" width="1" height="1" fill="#fff" />
<rect x="870" y="338" width="1" height="1" fill="#fff" />
<rect x="874" y="336" width="1" height="1" fill="#fff" />
<rect x="879" y="336" width="1" height="1" fill="#fff" />
<rect x="884" y="337" width="1" height="1" fill="#fff" />
<rect x="889" y="340" width="1" height="1" fill="#fff" />
<rect x="894" y="349" width="1" height="1" fill="#fff" />
<rect x="898" y="360" width="1" height="1" fill="#fff" />
<rect x="903" y="368" width="1" height="1" fill="#fff" />
<rect x="908" y="378" width="1" height="1" fill="#fff" />
<rect x="912" y="392" width="1" height="1" fill="#fff" />
<rect x="917" y="407" width="1" height="1" fill="#fff" />
<rect x="922" y="422" width="1" height="1" fill="#fff" />
<rect x="927" y="434" width="1" height="1" fill="#fff" />
<rect x="932" y="446" width="1" height="1" fill="#fff" />
<rect x="936" y="458" width="1" height="1" fill="#fff" />
<rect x="941" y="469" width="1" height="1" fill="#fff" />
<rect x="946" y="480" width="1" height="1" fill="#fff" />
<rect x="950" y="489" width="1" height="1" fill="#fff" />
<rect x="955" y="497" width="1" height="1" fill="#fff" />
<rect x="960" y="502" width="1" height="1" fill="#fff" />
<rect x="965" y="506" width="1" height="1" fill="#fff" />
<rect x="970" y="509" width="1" height="1" fill="#fff" />
<rect x="974" y="509" width="1" height="1" fill="#fff" />
<rect x="979" y="508" width="1" height="1" fill="#fff" />
<rect x="984" y="505" width="1" height="1" fill="#fff" />
<rect x="988" y="502" width="1" height="1" fill="#fff" />
<rect x="993" y="497" width="1" height="1" fill="#fff" />
<rect x="998" y="492" width="1" height="1" fill="#fff" />
<rect x="1003" y="487" width="1" height="1" fill="#fff" />
<rect x="1008" y="482" width="1" height="1" fill="#fff" />
<rect x="1012" y="477" width="1" height="1" fill="#fff" />
<rect x="1017" y="470" width="1" height="1" fill="#fff" />
<rect x="1022" y="463" width="1" height="1" fill="#fff" />
<rect x="1026" y="458" width="1" height="1" fill="#fff" />
<rect x="1031" y="451" width="1" height="1" fill="#fff" />
<rect x="1036" y="445" width="1" height="1" fill="#fff" />
<rect x="1041" y="438" width="1" height="1" fill="#fff" />
<rect x="1046" y="431" width="1" height="1" fill="#fff" />
<rect x="1050" y="424" width="1" height="1" fill="#fff" />
<rect x="1055" y="418" width="1" height="1" fill="#fff" />
<rect x="1060" y="411" width="1" height="1" fill="#fff" />
<rect x="1064" y="404" width="1" height="1" fill="#fff" />
</g>
<rect x="289" y="406" width="6" height="2" fill="#ff0000" />
<rect x="294" y="405" width="15" height="2" fill="#ff0000" />
<rect x="308" y="404" width="15" height="2" fill="#ff0000" />
<rect x="322" y="403" width="20" height="2" fill="#ff0000" />
<rect x="341" y="404" width="14" height="2" fill="#ff0000" />
<rect x="354" y="405" width="6" height="2" fill="#ff0000" />
<polyline points="836.5,402 840,396 844,386 848,377.4 851,367 855,354.9 857,351 860,347.5" fill="none" stroke="#ff0000" stroke-width="1.8" shape-rendering="crispEdges" />
<path d="M959.5 337 L1044.7 382.3 L1048.3 377.5 L1056.4 391.8 L1039 391.8 L1041.6 388.2 Z" fill="#fdb73a"/>
<text x="1126" y="412" fill="#ff3c3c" font-size="12" text-anchor="end" >0.00</text>
<circle cx="8" cy="521" r="6" fill="#8c8c8c"/>
<path d="M5.5 520 L8 522.8 L10.5 520" fill="none" stroke="#000" stroke-width="1.3"/>
<text x="18.5" y="525" fill="#c8c8c8" font-size="12" text-anchor="start" >CHO资金入场X</text>
<text x="0.8" y="624" fill="#808080" font-size="12" text-anchor="start" >用到未来数据</text>
<g shape-rendering="crispEdges">
<rect x="257" y="532" width="1" height="93" fill="#ffff00" />
<rect x="262" y="532" width="1" height="93" fill="#ffff00" />
<rect x="289" y="532" width="1" height="93" fill="#ffff00" />
<rect x="461" y="532" width="1" height="93" fill="#ffff00" />
<rect x="466" y="532" width="1" height="93" fill="#ffff00" />
<rect x="484" y="532" width="1" height="93" fill="#ffff00" />
<rect x="837" y="532" width="1" height="93" fill="#ffff00" />
<rect x="1064" y="532" width="1" height="93" fill="#ffff00" />
<rect x="1082" y="532" width="5" height="1" fill="#c00000" />
<rect x="1082" y="556" width="3" height="1" fill="#c00000" />
<rect x="1082" y="579" width="5" height="1" fill="#c00000" />
</g>
<text x="1126" y="537" fill="#ff3c3c" font-size="12" text-anchor="end" >1.00</text>
<text x="1126" y="584" fill="#ff3c3c" font-size="12" text-anchor="end" >0.50</text>
<g shape-rendering="crispEdges">
<rect x="43" y="627" width="1" height="16" fill="#c00000" />
<rect x="126" y="627" width="1" height="16" fill="#c00000" />
<rect x="225" y="627" width="1" height="16" fill="#c00000" />
<rect x="321" y="627" width="1" height="16" fill="#c00000" />
<rect x="404" y="627" width="1" height="16" fill="#c00000" />
<rect x="497" y="627" width="1" height="16" fill="#c00000" />
<rect x="604" y="627" width="1" height="16" fill="#c00000" />
<rect x="702" y="627" width="1" height="16" fill="#c00000" />
<rect x="804" y="627" width="1" height="16" fill="#c00000" />
<rect x="882" y="627" width="1" height="16" fill="#c00000" />
<rect x="977" y="627" width="1" height="16" fill="#c00000" />
<rect x="62" y="627" width="1" height="3" fill="#c00000" />
<rect x="85" y="627" width="1" height="3" fill="#c00000" />
<rect x="106" y="627" width="1" height="3" fill="#c00000" />
<rect x="152" y="627" width="1" height="3" fill="#c00000" />
<rect x="176" y="627" width="1" height="3" fill="#c00000" />
<rect x="200" y="627" width="1" height="3" fill="#c00000" />
<rect x="247" y="627" width="1" height="3" fill="#c00000" />
<rect x="271" y="627" width="1" height="3" fill="#c00000" />
<rect x="295" y="627" width="1" height="3" fill="#c00000" />
<rect x="346" y="627" width="1" height="3" fill="#c00000" />
<rect x="369" y="627" width="1" height="3" fill="#c00000" />
<rect x="384" y="627" width="1" height="3" fill="#c00000" />
<rect x="427" y="627" width="1" height="3" fill="#c00000" />
<rect x="451" y="627" width="1" height="3" fill="#c00000" />
<rect x="474" y="627" width="1" height="3" fill="#c00000" />
<rect x="522" y="627" width="1" height="3" fill="#c00000" />
<rect x="548" y="627" width="1" height="3" fill="#c00000" />
<rect x="578" y="627" width="1" height="3" fill="#c00000" />
<rect x="629" y="627" width="1" height="3" fill="#c00000" />
<rect x="653" y="627" width="1" height="3" fill="#c00000" />
<rect x="677" y="627" width="1" height="3" fill="#c00000" />
<rect x="728" y="627" width="1" height="3" fill="#c00000" />
<rect x="752" y="627" width="1" height="3" fill="#c00000" />
<rect x="778" y="627" width="1" height="3" fill="#c00000" />
<rect x="823" y="627" width="1" height="3" fill="#c00000" />
<rect x="844" y="627" width="1" height="3" fill="#c00000" />
<rect x="863" y="627" width="1" height="3" fill="#c00000" />
<rect x="906" y="627" width="1" height="3" fill="#c00000" />
<rect x="929" y="627" width="1" height="3" fill="#c00000" />
<rect x="952" y="627" width="1" height="3" fill="#c00000" />
<rect x="1001" y="627" width="1" height="3" fill="#c00000" />
<rect x="1025" y="627" width="1" height="3" fill="#c00000" />
<rect x="1049" y="627" width="1" height="3" fill="#c00000" />
<rect x="983" y="629" width="78" height="14" fill="#000080" />
</g>
<text x="2" y="640" fill="#ff3c3c" font-size="12" text-anchor="start" >2025年</text>
<text x="44.5" y="640" fill="#ff3c3c" font-size="12" text-anchor="start" >2</text>
<text x="127.5" y="640" fill="#ff3c3c" font-size="12" text-anchor="start" >3</text>
<text x="226.5" y="640" fill="#ff3c3c" font-size="12" text-anchor="start" >4</text>
<text x="322.5" y="640" fill="#ff3c3c" font-size="12" text-anchor="start" >5</text>
<text x="405.5" y="640" fill="#ff3c3c" font-size="12" text-anchor="start" >6</text>
<text x="498.5" y="640" fill="#ff3c3c" font-size="12" text-anchor="start" >7</text>
<text x="605.5" y="640" fill="#ff3c3c" font-size="12" text-anchor="start" >8</text>
<text x="703.5" y="640" fill="#ff3c3c" font-size="12" text-anchor="start" >9</text>
<text x="805.5" y="640" fill="#ff3c3c" font-size="12" text-anchor="start" >10</text>
<text x="883.5" y="640" fill="#ff3c3c" font-size="12" text-anchor="start" >11</text>
<text x="978.5" y="640" fill="#ff3c3c" font-size="12" text-anchor="start" >1</text>
<text x="984" y="640" fill="#d8d8d8" font-size="12" text-anchor="start" textLength="76">2025/12/25/四</text>
<text x="1094" y="640" fill="#c8c8c8" font-size="12" text-anchor="start" >日线</text>
<path d="M1129 41 Q1129 33 1140 33.5 L1240 33.5 Q1251 34 1250 42 Q1249 50 1238 50 L1142 50 Q1129 50 1129 41 Z" fill="#fa3c3c"/>
<g shape-rendering="crispEdges">
<rect x="1295" y="37" width="1" height="14" fill="#000080" />
<rect x="1296" y="38" width="5" height="1" fill="#008000" />
<rect x="1296" y="40" width="8" height="1" fill="#008000" />
<rect x="1296" y="42" width="11" height="1" fill="#008000" />
<rect x="1296" y="44" width="7" height="1" fill="#ff0000" />
<rect x="1296" y="46" width="4" height="1" fill="#ff0000" />
<rect x="1296" y="48" width="4" height="1" fill="#ff0000" />
<rect x="1296" y="50" width="2" height="1" fill="#ff0000" />
<rect x="1311" y="37" width="1" height="14" fill="#000080" />
</g>
<path d="M1312 37 L1318 41 L1323 42 L1323 43 L1318 44 L1312 51 Z" fill="#ff0000"/>
<path d="M1312 39.5 L1317 43 L1312 48.5 Z" fill="#ffff00"/>
<rect x="1328.5" y="36.5" width="16" height="16" fill="#000" stroke="#ff3030" stroke-width="1"/>
<rect x="1329" y="37" width="1" height="14" fill="#000080" />
<path d="M1330 37 L1334 37 L1337 40.5 L1341 41 L1341 42 L1337 42.5 L1331 50 L1330 50 Z" fill="#00ff00"/>
<path d="M1330 38 L1335 42 L1330 48 Z" fill="#0000ff"/>
<g shape-rendering="crispEdges">
<rect x="1346" y="36" width="15" height="15" fill="#000080" />
<rect x="1347" y="37" width="13" height="13" fill="#d4d0c8" />
<rect x="1356" y="39" width="4" height="5" fill="#ffff00" />
<rect x="1348" y="41" width="5" height="4" fill="#00ffff" />
<rect x="1352" y="39" width="5" height="1" fill="#000080" />
<rect x="1355" y="40" width="1" height="4" fill="#000080" />
<rect x="1349" y="46" width="2" height="1" fill="#000080" />
<rect x="1352" y="46" width="6" height="1" fill="#000080" />
<rect x="1349" y="48" width="2" height="1" fill="#000080" />
<rect x="1352" y="48" width="6" height="1" fill="#000080" />
</g>
<polygon points="1133.5,125.5 1363,144.3 1345,144.8 1241,149.6 1181.5,152.7 1181.5,156 1142.6,162.7 1134,166 1137.3,173.3 1142.6,180.3 1142.6,190.9 1133.5,197.4" fill="#7850ff" shape-rendering="crispEdges"/>
<polyline points="1133.5,125.5 1363,144.3 1345,144.8 1241,149.6 1181.5,152.7 1181.5,156 1142.6,162.7 1134,166 1137.3,173.3 1142.6,180.3 1142.6,190.9 1133.5,197.4" fill="none" stroke="#fff" stroke-width="1" shape-rendering="crispEdges"/>
<polygon points="1134,184 1140.5,174.5 1141.5,190 1134,195" fill="#a8a8ff"/>
<polygon points="1138,183 1140.5,178 1141,189 1138,187.5" fill="#7878ff"/>
<polyline points="1138,183 1140.5,178 1138,183 1138,187.5 1141,189" fill="none" stroke="#fff" stroke-width="0.8"/>
<rect x="1083" y="116" width="49" height="2" fill="#000080" />
<path d="M1079 126 Q1079 118 1092 118.5 L1124 118 Q1135 118 1134.5 126 Q1134 134.5 1122 134 L1092 134.5 Q1079 134 1079 126 Z" fill="#fa3c3c"/>
<rect x="1236" y="453" width="126" height="17" fill="#7850ff" />
<text x="1242" y="465.3" fill="#000" font-size="12" text-anchor="start" textLength="100.5">5周期内成本95.8%</text>
<rect x="1236" y="470" width="126" height="17" fill="#a0a0ff" />
<text x="1242" y="482.3" fill="#000" font-size="12" text-anchor="start" textLength="107.7">10周期内成本98.9%</text>
<rect x="1236" y="487" width="126" height="17" fill="#7878ff" />
<text x="1242" y="499.3" fill="#000" font-size="12" text-anchor="start" textLength="107.7">20周期内成本99.9%</text>
<rect x="1236" y="504" width="126" height="17" fill="#5050ff" />
<text x="1242" y="516.3" fill="#000" font-size="12" text-anchor="start" textLength="114.6">30周期内成本100.0%</text>
<rect x="1236" y="521" width="126" height="17" fill="#2846c8" />
<text x="1242" y="533.3" fill="#000" font-size="12" text-anchor="start" textLength="114.6">60周期内成本100.0%</text>
<rect x="1236" y="538" width="126" height="17" fill="#0a4690" />
<text x="1242" y="550.3" fill="#000" font-size="12" text-anchor="start" textLength="120">100周期内成本100.0%</text>
<text x="1136" y="567" fill="#c8c8c8" font-size="12" text-anchor="start" textLength="145">成本分布,日期: 2025/12/25</text>
<text x="1136" y="584" fill="#c8c8c8" font-size="12" text-anchor="start" >获利比例:</text>
<rect x="1193.5" y="573.5" width="165" height="14" fill="none" stroke="#fff" stroke-width="1"/>
<rect x="1193.5" y="573.5" width="111" height="14" fill="none" stroke="#ffff00" stroke-width="1"/>
<text x="1278" y="584.5" fill="#fff" font-size="12" text-anchor="middle" >67.4%</text>
<text x="1136" y="601" fill="#c8c8c8" font-size="12" text-anchor="start" textLength="122">14.49处获利盘: 93.5%</text>
<text x="1136" y="618" fill="#c8c8c8" font-size="12" text-anchor="start" textLength="99">平均成本: 13.88元</text>
<text x="1136" y="635" fill="#c8c8c8" font-size="12" text-anchor="start" textLength="173">90%成本12.30-14.54集中12.9%</text>
<text x="1136" y="652" fill="#c8c8c8" font-size="12" text-anchor="start" >70%成本12.80-14.38集中5.8%</text>
</svg>
</body></html>
